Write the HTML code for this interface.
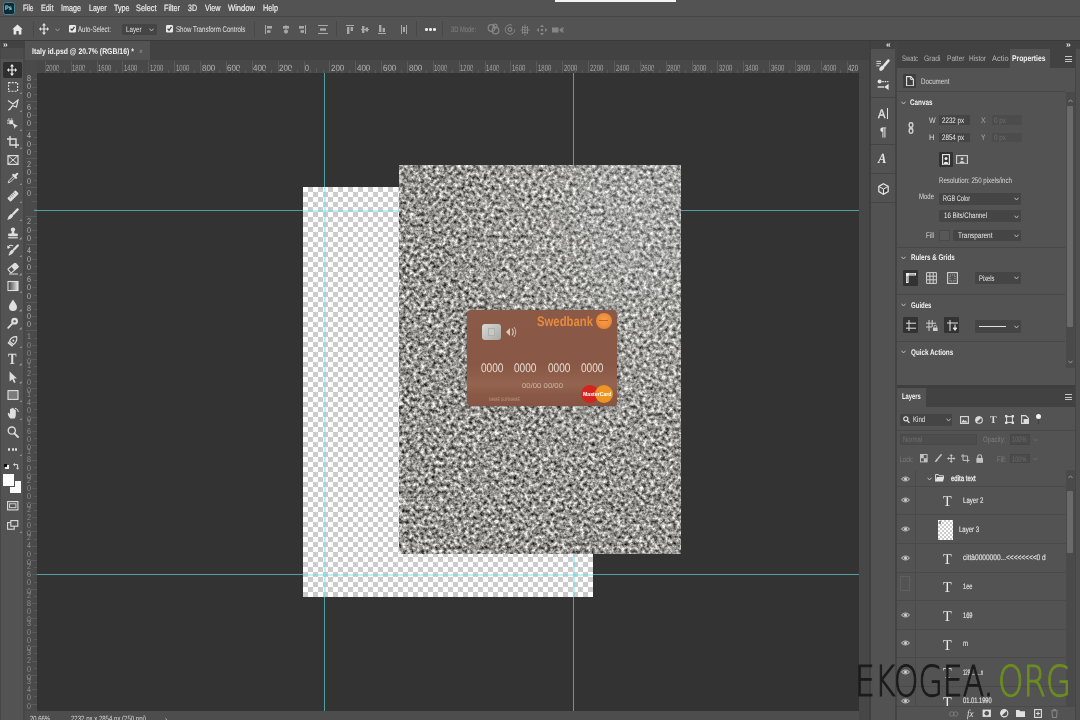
<!DOCTYPE html>
<html lang="en"><head><meta charset="utf-8"><title>Italy id.psd @ 20.7% (RGB/16)</title>
<style>
html,body{margin:0;padding:0;background:#535353;}
#app{position:relative;width:1080px;height:720px;overflow:hidden;font-family:"Liberation Sans",sans-serif;}
.r{position:absolute;display:block;}
.t{position:absolute;white-space:nowrap;line-height:1;transform-origin:0 50%;font-family:"Liberation Sans",sans-serif;text-rendering:geometricPrecision;}
</style></head>
<body><div id="app">
<div class="r" style="left:0px;top:0px;width:1080px;height:720px;background:#535353;"></div>
<div class="r" style="left:0px;top:16px;width:1080px;height:1px;background:#464646;"></div>
<div class="r" style="left:0px;top:40px;width:1080px;height:1px;background:#3a3a3a;"></div>
<div class="r" style="left:0px;top:41px;width:870px;height:19px;background:#424242;"></div>
<div class="r" style="left:25px;top:41px;width:125px;height:19px;background:#535353;"></div>
<div class="r" style="left:0px;top:41px;width:25px;height:679px;background:#535353;"></div>
<div class="r" style="left:0px;top:41px;width:25px;height:6.5px;background:#424242;"></div>
<div class="r" style="left:0px;top:47.5px;width:25px;height:11.5px;background:#4c4c4c;"></div>
<div class="r" style="left:25px;top:60px;width:835px;height:13px;background:#484848;"></div>
<div class="r" style="left:25px;top:60px;width:12px;height:651px;background:#4a4a4a;"></div>
<div class="r" style="left:37px;top:73px;width:823px;height:638px;background:#333333;"></div>
<div class="r" style="left:25px;top:711px;width:835px;height:9px;background:#4d4d4d;"></div>
<div class="r" style="left:860px;top:41px;width:10px;height:679px;background:#424242;"></div>
<div class="r" style="left:870px;top:41px;width:210px;height:679px;background:#424242;"></div>
<div class="r" style="left:303px;top:187px;width:290px;height:410px;background-color:#fff;background-image:linear-gradient(45deg,#ccc 25%,transparent 25%,transparent 75%,#ccc 75%),linear-gradient(45deg,#ccc 25%,transparent 25%,transparent 75%,#ccc 75%);background-size:10px 10px;background-position:0 0,5px 5px;"></div>
<div class="r" style="left:324px;top:73px;width:1px;height:114px;background:#529ea4;"></div>
<div class="r" style="left:324px;top:597px;width:1px;height:114px;background:#529ea4;"></div>
<div class="r" style="left:573px;top:73px;width:1px;height:114px;background:#529ea4;"></div>
<div class="r" style="left:573px;top:597px;width:1px;height:114px;background:#529ea4;"></div>
<div class="r" style="left:34px;top:210px;width:269px;height:1px;background:#529ea4;"></div>
<div class="r" style="left:593px;top:210px;width:267px;height:1px;background:#529ea4;"></div>
<div class="r" style="left:34px;top:574px;width:269px;height:1px;background:#529ea4;"></div>
<div class="r" style="left:593px;top:574px;width:267px;height:1px;background:#529ea4;"></div>
<div class="r" style="left:323.5px;top:187px;width:2px;height:410px;background:rgba(110,222,232,.42);"></div>
<div class="r" style="left:572.5px;top:187px;width:2px;height:410px;background:rgba(110,222,232,.42);"></div>
<div class="r" style="left:303px;top:209.5px;width:290px;height:2px;background:rgba(110,222,232,.42);"></div>
<div class="r" style="left:303px;top:573.5px;width:290px;height:2px;background:rgba(110,222,232,.42);"></div>
<svg class="r" style="left:399px;top:165px" width="282" height="389" viewBox="0 0 282 389"><defs><filter id="gr" x="0" y="0" width="100%" height="100%" color-interpolation-filters="sRGB"><feTurbulence type="fractalNoise" baseFrequency="0.27" numOctaves="3" seed="7" result="n"/><feColorMatrix type="matrix" values="1.4 0 0 0 -0.115  1.4 0 0 0 -0.120  1.4 0 0 0 -0.135  0 0 0 0 1"/></filter></defs><rect width="282" height="389" fill="#84837e"/><rect width="282" height="389" filter="url(#gr)"/><defs><radialGradient id="pl" cx="0.85" cy="0.12" r="0.7"><stop offset="0" stop-color="#e8eef2" stop-opacity=".22"/><stop offset="1" stop-color="#e8eef2" stop-opacity="0"/></radialGradient></defs><rect width="282" height="389" fill="url(#pl)"/></svg>
<div class="r" style="left:467px;top:309.5px;width:150.3px;height:96.5px;border-radius:4px;background:linear-gradient(180deg,#8b5a47 0%,#885745 55%,#94644f 78%,#8a5946 88%,#855443 100%);box-shadow:0 0 2px rgba(40,30,25,.6);"></div>
<span class="t " style="left:537.00px;top:315.00px;font-size:13.8px;color:#e88a3e;font-weight:700;transform:scaleX(0.820);">Swedbank</span>
<div class="r" style="left:595.5px;top:312.5px;width:16px;height:16px;border-radius:50%;background:radial-gradient(circle at 50% 45%,#f6a04a,#e57a2c);"></div>
<div class="r" style="left:599px;top:319.8px;width:9px;height:1.6px;background:#c96420;"></div>
<div class="r" style="left:482px;top:324px;width:19px;height:16px;border-radius:3px;background:linear-gradient(135deg,#d9d9d6,#a9a9a6);"></div>
<div class="r" style="left:488px;top:328px;width:7px;height:8px;background:#c8c8c5;border:1px solid #b0b0ad;box-sizing:border-box;"></div>
<svg class="r" style="left:505px;top:325px;" width="12" height="14" viewBox="0 0 12 14"><path d="M1 7 L5 3 L5 11 Z" fill="#d8c9c0"/><path d="M7 3.5 Q9.5 7 7 10.5" stroke="#d8c9c0" stroke-width="1.2" fill="none"/><path d="M9 2 Q12.5 7 9 12" stroke="#c9b6ab" stroke-width="1" fill="none"/></svg>
<span class="t emb" style="left:481.00px;top:362.00px;font-size:12.4px;color:#e9dcd3;transform:scaleX(0.816);">0000</span>
<span class="t emb" style="left:514.00px;top:362.00px;font-size:12.4px;color:#e9dcd3;transform:scaleX(0.816);">0000</span>
<span class="t emb" style="left:548.00px;top:362.00px;font-size:12.4px;color:#e9dcd3;transform:scaleX(0.816);">0000</span>
<span class="t emb" style="left:581.00px;top:362.00px;font-size:12.4px;color:#e9dcd3;transform:scaleX(0.816);">0000</span>
<span class="t " style="left:522.00px;top:383.00px;font-size:7px;color:#d9c6bb;opacity:0.8;transform:scaleX(1.109);">00/00 00/00</span>
<span class="t " style="left:489.00px;top:398.00px;font-size:5px;color:#c9ab9d;opacity:0.8;transform:scaleX(0.759);">NAME SURNAME</span>
<div class="r" style="left:581px;top:384.5px;width:18px;height:18px;border-radius:50%;background:#d4241f;"></div>
<div class="r" style="left:594.5px;top:384.5px;width:18px;height:18px;border-radius:50%;background:#f39a1e;opacity:.93"></div>
<span class="t " style="left:582.50px;top:393.00px;font-size:5.8px;color:#fff;font-weight:700;transform:scaleX(0.893);">MasterCard</span>
<div class="r" style="left:555px;top:0px;width:121px;height:2px;background:#f4f4f4;"></div>
<div class="r" style="left:2.6px;top:2.4px;width:12.2px;height:12.2px;border-radius:2.6px;background:#0a2c36;border:1.3px solid #4c8190;box-sizing:border-box;"></div>
<span class="t " style="left:5.20px;top:6.00px;font-size:6.4px;color:#9adbe8;font-weight:700;transform:scaleX(0.894);">Ps</span>
<span class="t " style="left:22.50px;top:4.00px;font-size:9.2px;color:#ececec;-webkit-text-stroke:0.2px #ececec;transform:scaleX(0.708);">File</span>
<span class="t " style="left:40.50px;top:4.00px;font-size:9.2px;color:#ececec;-webkit-text-stroke:0.2px #ececec;transform:scaleX(0.788);">Edit</span>
<span class="t " style="left:61.00px;top:4.00px;font-size:9.2px;color:#ececec;-webkit-text-stroke:0.2px #ececec;transform:scaleX(0.782);">Image</span>
<span class="t " style="left:89.00px;top:4.00px;font-size:9.2px;color:#ececec;-webkit-text-stroke:0.2px #ececec;transform:scaleX(0.760);">Layer</span>
<span class="t " style="left:114.00px;top:4.00px;font-size:9.2px;color:#ececec;-webkit-text-stroke:0.2px #ececec;transform:scaleX(0.777);">Type</span>
<span class="t " style="left:136.00px;top:4.00px;font-size:9.2px;color:#ececec;-webkit-text-stroke:0.2px #ececec;transform:scaleX(0.802);">Select</span>
<span class="t " style="left:164.00px;top:4.00px;font-size:9.2px;color:#ececec;-webkit-text-stroke:0.2px #ececec;transform:scaleX(0.783);">Filter</span>
<span class="t " style="left:188.00px;top:4.00px;font-size:9.2px;color:#ececec;-webkit-text-stroke:0.2px #ececec;transform:scaleX(0.765);">3D</span>
<span class="t " style="left:204.50px;top:4.00px;font-size:9.2px;color:#ececec;-webkit-text-stroke:0.2px #ececec;transform:scaleX(0.784);">View</span>
<span class="t " style="left:228.00px;top:4.00px;font-size:9.2px;color:#ececec;-webkit-text-stroke:0.2px #ececec;transform:scaleX(0.825);">Window</span>
<span class="t " style="left:263.00px;top:4.00px;font-size:9.2px;color:#ececec;-webkit-text-stroke:0.2px #ececec;transform:scaleX(0.793);">Help</span>
<svg class="r" style="left:12px;top:24px;" width="11" height="11" viewBox="0 0 11 11"><path d="M5.5 0.6 L0.3 5.3 L1.6 5.3 L1.6 10.6 L4.3 10.6 L4.3 7 L6.7 7 L6.7 10.6 L9.4 10.6 L9.4 5.3 L10.7 5.3 Z" fill="#e8e8e8"/></svg>
<div class="r" style="left:33px;top:21px;width:1px;height:16px;background:#484848;"></div>
<svg class="r" style="left:38.5px;top:23px;" width="10" height="12" viewBox="0 0 10 12"><path d="M5 0 L7 2.4 H5.6 V5.4 H8 V4 L10 6 L8 8 V6.6 H5.6 V9.6 H7 L5 12 L3 9.6 H4.4 V6.6 H2 V8 L0 6 L2 4 V5.4 H4.4 V2.4 H3 Z" fill="#e4e4e4"/></svg>
<svg class="r" style="left:55px;top:27.5px;" width="5" height="4" viewBox="0 0 5 4"><path d="M0.5 0.7 L2.5 3 L4.5 0.7" stroke="#9a9a9a" stroke-width="1" fill="none"/></svg>
<svg class="r" style="left:68.5px;top:25px;" width="7" height="7.5" viewBox="0 0 7 7.5"><rect x="0" y="0" width="7" height="7.5" rx="1.3" fill="#e9e9e9"/><path d="M1.6 3.6 L3 5.3 L5.5 1.9" stroke="#3b3b3b" stroke-width="1.3" fill="none"/></svg>
<span class="t " style="left:78.00px;top:26.00px;font-size:8.2px;color:#e4e4e4;transform:scaleX(0.739);">Auto-Select:</span>
<div class="r" style="left:122px;top:23.5px;width:35px;height:11.5px;background:#454545;border-radius:1.5px;"></div>
<span class="t " style="left:126.00px;top:26.00px;font-size:8px;color:#e4e4e4;transform:scaleX(0.775);">Layer</span>
<svg class="r" style="left:148.5px;top:27.5px;" width="5" height="4" viewBox="0 0 5 4"><path d="M0.5 0.7 L2.5 3 L4.5 0.7" stroke="#bdbdbd" stroke-width="1" fill="none"/></svg>
<svg class="r" style="left:165.5px;top:25px;" width="7" height="7.5" viewBox="0 0 7 7.5"><rect x="0" y="0" width="7" height="7.5" rx="1.3" fill="#e9e9e9"/><path d="M1.6 3.6 L3 5.3 L5.5 1.9" stroke="#3b3b3b" stroke-width="1.3" fill="none"/></svg>
<span class="t " style="left:175.50px;top:26.00px;font-size:8.2px;color:#e4e4e4;transform:scaleX(0.751);">Show Transform Controls</span>
<div class="r" style="left:254px;top:21px;width:1px;height:16px;background:#484848;"></div>
<svg class="r" style="left:265px;top:24.5px;" width="8" height="9" viewBox="0 0 8 9"><rect x="0" y="0" width="1" height="9" fill="#a8a8a8"/><rect x="2" y="1" width="5" height="2.6" fill="#a8a8a8"/><rect x="2" y="5.2" width="3.5" height="2.6" fill="#a8a8a8"/></svg>
<svg class="r" style="left:282px;top:24.5px;" width="8" height="9" viewBox="0 0 8 9"><rect x="3.5" y="0" width="1" height="9" fill="#a8a8a8"/><rect x="1" y="1" width="6" height="2.6" fill="#a8a8a8"/><rect x="2" y="5.2" width="4" height="2.6" fill="#a8a8a8"/></svg>
<svg class="r" style="left:297.5px;top:24.5px;" width="8" height="9" viewBox="0 0 8 9"><rect x="7" y="0" width="1" height="9" fill="#a8a8a8"/><rect x="1" y="1" width="5" height="2.6" fill="#a8a8a8"/><rect x="2.5" y="5.2" width="3.5" height="2.6" fill="#a8a8a8"/></svg>
<svg class="r" style="left:317.5px;top:24.5px;" width="10" height="9" viewBox="0 0 10 9"><rect x="0" y="0" width="10" height="1" fill="#a8a8a8"/><rect x="0" y="8" width="10" height="1" fill="#a8a8a8"/><rect x="2" y="3.3" width="6" height="2.4" fill="#a8a8a8"/></svg>
<div class="r" style="left:336px;top:21px;width:1px;height:16px;background:#484848;"></div>
<svg class="r" style="left:346px;top:24.5px;" width="8" height="9" viewBox="0 0 8 9"><rect x="0" y="0" width="8" height="1" fill="#a8a8a8"/><rect x="1" y="2" width="2.4" height="7" fill="#a8a8a8"/><rect x="4.6" y="2" width="2.4" height="4" fill="#a8a8a8"/></svg>
<svg class="r" style="left:361px;top:24.5px;" width="8" height="9" viewBox="0 0 8 9"><rect x="0" y="4" width="8" height="1" fill="#a8a8a8"/><rect x="1" y="1" width="2.4" height="7" fill="#a8a8a8"/><rect x="4.6" y="2.5" width="2.4" height="4" fill="#a8a8a8"/></svg>
<svg class="r" style="left:378px;top:24.5px;" width="8" height="9" viewBox="0 0 8 9"><rect x="0" y="8" width="8" height="1" fill="#a8a8a8"/><rect x="1" y="0" width="2.4" height="7" fill="#a8a8a8"/><rect x="4.6" y="3" width="2.4" height="4" fill="#a8a8a8"/></svg>
<svg class="r" style="left:401px;top:24.5px;" width="6" height="9" viewBox="0 0 6 9"><rect x="0" y="0" width="1" height="9" fill="#a8a8a8"/><rect x="5" y="0" width="1" height="9" fill="#a8a8a8"/><rect x="2" y="2" width="2" height="5" fill="#a8a8a8"/></svg>
<div class="r" style="left:416px;top:21px;width:1px;height:16px;background:#484848;"></div>
<div class="r" style="left:425.0px;top:28.3px;width:2.6px;height:2.6px;border-radius:50%;background:#ededed;"></div>
<div class="r" style="left:429.2px;top:28.3px;width:2.6px;height:2.6px;border-radius:50%;background:#ededed;"></div>
<div class="r" style="left:433.4px;top:28.3px;width:2.6px;height:2.6px;border-radius:50%;background:#ededed;"></div>
<div class="r" style="left:442px;top:21px;width:1px;height:16px;background:#484848;"></div>
<span class="t " style="left:451.00px;top:26.00px;font-size:8px;color:#7c7c7c;-webkit-text-stroke:0.15px #7c7c7c;transform:scaleX(0.721);">3D Mode:</span>
<svg class="r" style="left:487px;top:23px;" width="13" height="13" viewBox="0 0 13 13"><circle cx="4.5" cy="5" r="3.3" stroke="#868686" stroke-width="1.25" fill="none"/><circle cx="8.5" cy="7.5" r="3.3" stroke="#868686" stroke-width="1.25" fill="none"/><circle cx="8" cy="3" r="2" stroke="#868686" stroke-width="1.25" fill="none"/></svg>
<svg class="r" style="left:504px;top:23px;" width="12" height="13" viewBox="0 0 12 13"><circle cx="6" cy="6.5" r="4.8" stroke="#868686" fill="none" stroke-dasharray="24 6"/><circle cx="6" cy="6.5" r="1.8" stroke="#868686" stroke-width="1.25" fill="none"/></svg>
<svg class="r" style="left:520px;top:23.5px;" width="10" height="12" viewBox="0 0 10 12"><path d="M5 0.5V11.5M0.5 6H9.5M2 3.5H8M2 8.5H8M2.5 2V10M7.5 2V10" stroke="#868686" stroke-width="0.9" fill="none"/></svg>
<svg class="r" style="left:536px;top:23.5px;" width="12" height="12" viewBox="0 0 12 12"><path d="M6 0.5L8 3H4ZM6 11.5L8 9H4ZM0.5 6L3 4V8ZM11.5 6L9 4V8Z" fill="#868686"/><circle cx="6" cy="6" r="1.2" fill="#868686"/></svg>
<svg class="r" style="left:552px;top:25.5px;" width="12" height="8" viewBox="0 0 12 8"><rect x="0" y="1.5" width="6.5" height="5" fill="#868686"/><path d="M7 4L10.5 1V7Z" fill="#868686"/><path d="M11.5 1.5L10.5 4L11.5 6.5" stroke="#868686" fill="none" stroke-width=".8"/></svg>
<span class="t " style="left:32.00px;top:48.00px;font-size:8.2px;color:#f4f4f4;font-weight:700;transform:scaleX(0.840);">Italy id.psd @ 20.7% (RGB/16) *</span>
<span class="t " style="left:139.30px;top:48.00px;font-size:8px;color:#9a9a9a;transform:scaleX(0.813);">×</span>
<div class="r" style="left:25px;top:60px;width:12px;height:13px;background:#4a4a4a;"></div>
<div class="r" style="left:45px;top:61px;width:1px;height:12px;background:#5a5a5a;"></div>
<span class="t " style="left:46.40px;top:64.00px;font-size:9px;color:#a4a4a4;transform:scaleX(0.664);">2000</span>
<div class="r" style="left:51px;top:70px;width:1px;height:3px;background:#5a5a5a;"></div>
<div class="r" style="left:58px;top:68px;width:1px;height:5px;background:#5a5a5a;"></div>
<div class="r" style="left:64px;top:70px;width:1px;height:3px;background:#5a5a5a;"></div>
<div class="r" style="left:71px;top:61px;width:1px;height:12px;background:#5a5a5a;"></div>
<span class="t " style="left:72.27px;top:64.00px;font-size:9px;color:#a4a4a4;transform:scaleX(0.664);">1800</span>
<div class="r" style="left:77px;top:70px;width:1px;height:3px;background:#5a5a5a;"></div>
<div class="r" style="left:84px;top:68px;width:1px;height:5px;background:#5a5a5a;"></div>
<div class="r" style="left:90px;top:70px;width:1px;height:3px;background:#5a5a5a;"></div>
<div class="r" style="left:97px;top:61px;width:1px;height:12px;background:#5a5a5a;"></div>
<span class="t " style="left:98.14px;top:64.00px;font-size:9px;color:#a4a4a4;transform:scaleX(0.664);">1600</span>
<div class="r" style="left:103px;top:70px;width:1px;height:3px;background:#5a5a5a;"></div>
<div class="r" style="left:109px;top:68px;width:1px;height:5px;background:#5a5a5a;"></div>
<div class="r" style="left:116px;top:70px;width:1px;height:3px;background:#5a5a5a;"></div>
<div class="r" style="left:122px;top:61px;width:1px;height:12px;background:#5a5a5a;"></div>
<span class="t " style="left:124.01px;top:64.00px;font-size:9px;color:#a4a4a4;transform:scaleX(0.664);">1400</span>
<div class="r" style="left:129px;top:70px;width:1px;height:3px;background:#5a5a5a;"></div>
<div class="r" style="left:135px;top:68px;width:1px;height:5px;background:#5a5a5a;"></div>
<div class="r" style="left:142px;top:70px;width:1px;height:3px;background:#5a5a5a;"></div>
<div class="r" style="left:148px;top:61px;width:1px;height:12px;background:#5a5a5a;"></div>
<span class="t " style="left:149.88px;top:64.00px;font-size:9px;color:#a4a4a4;transform:scaleX(0.664);">1200</span>
<div class="r" style="left:155px;top:70px;width:1px;height:3px;background:#5a5a5a;"></div>
<div class="r" style="left:161px;top:68px;width:1px;height:5px;background:#5a5a5a;"></div>
<div class="r" style="left:168px;top:70px;width:1px;height:3px;background:#5a5a5a;"></div>
<div class="r" style="left:174px;top:61px;width:1px;height:12px;background:#5a5a5a;"></div>
<span class="t " style="left:175.75px;top:64.00px;font-size:9px;color:#a4a4a4;transform:scaleX(0.664);">1000</span>
<div class="r" style="left:181px;top:70px;width:1px;height:3px;background:#5a5a5a;"></div>
<div class="r" style="left:187px;top:68px;width:1px;height:5px;background:#5a5a5a;"></div>
<div class="r" style="left:194px;top:70px;width:1px;height:3px;background:#5a5a5a;"></div>
<div class="r" style="left:200px;top:61px;width:1px;height:12px;background:#5a5a5a;"></div>
<span class="t " style="left:201.62px;top:64.00px;font-size:9px;color:#b4b4b4;transform:scaleX(0.886);">800</span>
<div class="r" style="left:206px;top:70px;width:1px;height:3px;background:#5a5a5a;"></div>
<div class="r" style="left:213px;top:68px;width:1px;height:5px;background:#5a5a5a;"></div>
<div class="r" style="left:219px;top:70px;width:1px;height:3px;background:#5a5a5a;"></div>
<div class="r" style="left:226px;top:61px;width:1px;height:12px;background:#5a5a5a;"></div>
<span class="t " style="left:227.49px;top:64.00px;font-size:9px;color:#b4b4b4;transform:scaleX(0.886);">600</span>
<div class="r" style="left:232px;top:70px;width:1px;height:3px;background:#5a5a5a;"></div>
<div class="r" style="left:239px;top:68px;width:1px;height:5px;background:#5a5a5a;"></div>
<div class="r" style="left:245px;top:70px;width:1px;height:3px;background:#5a5a5a;"></div>
<div class="r" style="left:252px;top:61px;width:1px;height:12px;background:#5a5a5a;"></div>
<span class="t " style="left:253.36px;top:64.00px;font-size:9px;color:#b4b4b4;transform:scaleX(0.886);">400</span>
<div class="r" style="left:258px;top:70px;width:1px;height:3px;background:#5a5a5a;"></div>
<div class="r" style="left:265px;top:68px;width:1px;height:5px;background:#5a5a5a;"></div>
<div class="r" style="left:271px;top:70px;width:1px;height:3px;background:#5a5a5a;"></div>
<div class="r" style="left:278px;top:61px;width:1px;height:12px;background:#5a5a5a;"></div>
<span class="t " style="left:279.23px;top:64.00px;font-size:9px;color:#b4b4b4;transform:scaleX(0.886);">200</span>
<div class="r" style="left:284px;top:70px;width:1px;height:3px;background:#5a5a5a;"></div>
<div class="r" style="left:291px;top:68px;width:1px;height:5px;background:#5a5a5a;"></div>
<div class="r" style="left:297px;top:70px;width:1px;height:3px;background:#5a5a5a;"></div>
<div class="r" style="left:304px;top:61px;width:1px;height:12px;background:#5a5a5a;"></div>
<span class="t " style="left:305.10px;top:64.00px;font-size:9px;color:#b4b4b4;transform:scaleX(0.799);">0</span>
<div class="r" style="left:310px;top:70px;width:1px;height:3px;background:#5a5a5a;"></div>
<div class="r" style="left:316px;top:68px;width:1px;height:5px;background:#5a5a5a;"></div>
<div class="r" style="left:323px;top:70px;width:1px;height:3px;background:#5a5a5a;"></div>
<div class="r" style="left:329px;top:61px;width:1px;height:12px;background:#5a5a5a;"></div>
<span class="t " style="left:330.97px;top:64.00px;font-size:9px;color:#b4b4b4;transform:scaleX(0.886);">200</span>
<div class="r" style="left:336px;top:70px;width:1px;height:3px;background:#5a5a5a;"></div>
<div class="r" style="left:342px;top:68px;width:1px;height:5px;background:#5a5a5a;"></div>
<div class="r" style="left:349px;top:70px;width:1px;height:3px;background:#5a5a5a;"></div>
<div class="r" style="left:355px;top:61px;width:1px;height:12px;background:#5a5a5a;"></div>
<span class="t " style="left:356.84px;top:64.00px;font-size:9px;color:#b4b4b4;transform:scaleX(0.886);">400</span>
<div class="r" style="left:362px;top:70px;width:1px;height:3px;background:#5a5a5a;"></div>
<div class="r" style="left:368px;top:68px;width:1px;height:5px;background:#5a5a5a;"></div>
<div class="r" style="left:375px;top:70px;width:1px;height:3px;background:#5a5a5a;"></div>
<div class="r" style="left:381px;top:61px;width:1px;height:12px;background:#5a5a5a;"></div>
<span class="t " style="left:382.71px;top:64.00px;font-size:9px;color:#b4b4b4;transform:scaleX(0.886);">600</span>
<div class="r" style="left:388px;top:70px;width:1px;height:3px;background:#5a5a5a;"></div>
<div class="r" style="left:394px;top:68px;width:1px;height:5px;background:#5a5a5a;"></div>
<div class="r" style="left:401px;top:70px;width:1px;height:3px;background:#5a5a5a;"></div>
<div class="r" style="left:407px;top:61px;width:1px;height:12px;background:#5a5a5a;"></div>
<span class="t " style="left:408.58px;top:64.00px;font-size:9px;color:#b4b4b4;transform:scaleX(0.886);">800</span>
<div class="r" style="left:413px;top:70px;width:1px;height:3px;background:#5a5a5a;"></div>
<div class="r" style="left:420px;top:68px;width:1px;height:5px;background:#5a5a5a;"></div>
<div class="r" style="left:426px;top:70px;width:1px;height:3px;background:#5a5a5a;"></div>
<div class="r" style="left:433px;top:61px;width:1px;height:12px;background:#5a5a5a;"></div>
<span class="t " style="left:434.45px;top:64.00px;font-size:9px;color:#a4a4a4;transform:scaleX(0.664);">1000</span>
<div class="r" style="left:439px;top:70px;width:1px;height:3px;background:#5a5a5a;"></div>
<div class="r" style="left:446px;top:68px;width:1px;height:5px;background:#5a5a5a;"></div>
<div class="r" style="left:452px;top:70px;width:1px;height:3px;background:#5a5a5a;"></div>
<div class="r" style="left:459px;top:61px;width:1px;height:12px;background:#5a5a5a;"></div>
<span class="t " style="left:460.32px;top:64.00px;font-size:9px;color:#a4a4a4;transform:scaleX(0.664);">1200</span>
<div class="r" style="left:465px;top:70px;width:1px;height:3px;background:#5a5a5a;"></div>
<div class="r" style="left:472px;top:68px;width:1px;height:5px;background:#5a5a5a;"></div>
<div class="r" style="left:478px;top:70px;width:1px;height:3px;background:#5a5a5a;"></div>
<div class="r" style="left:485px;top:61px;width:1px;height:12px;background:#5a5a5a;"></div>
<span class="t " style="left:486.19px;top:64.00px;font-size:9px;color:#a4a4a4;transform:scaleX(0.664);">1400</span>
<div class="r" style="left:491px;top:70px;width:1px;height:3px;background:#5a5a5a;"></div>
<div class="r" style="left:498px;top:68px;width:1px;height:5px;background:#5a5a5a;"></div>
<div class="r" style="left:504px;top:70px;width:1px;height:3px;background:#5a5a5a;"></div>
<div class="r" style="left:510px;top:61px;width:1px;height:12px;background:#5a5a5a;"></div>
<span class="t " style="left:512.06px;top:64.00px;font-size:9px;color:#a4a4a4;transform:scaleX(0.664);">1600</span>
<div class="r" style="left:517px;top:70px;width:1px;height:3px;background:#5a5a5a;"></div>
<div class="r" style="left:523px;top:68px;width:1px;height:5px;background:#5a5a5a;"></div>
<div class="r" style="left:530px;top:70px;width:1px;height:3px;background:#5a5a5a;"></div>
<div class="r" style="left:536px;top:61px;width:1px;height:12px;background:#5a5a5a;"></div>
<span class="t " style="left:537.93px;top:64.00px;font-size:9px;color:#a4a4a4;transform:scaleX(0.664);">1800</span>
<div class="r" style="left:543px;top:70px;width:1px;height:3px;background:#5a5a5a;"></div>
<div class="r" style="left:549px;top:68px;width:1px;height:5px;background:#5a5a5a;"></div>
<div class="r" style="left:556px;top:70px;width:1px;height:3px;background:#5a5a5a;"></div>
<div class="r" style="left:562px;top:61px;width:1px;height:12px;background:#5a5a5a;"></div>
<span class="t " style="left:563.80px;top:64.00px;font-size:9px;color:#a4a4a4;transform:scaleX(0.664);">2000</span>
<div class="r" style="left:569px;top:70px;width:1px;height:3px;background:#5a5a5a;"></div>
<div class="r" style="left:575px;top:68px;width:1px;height:5px;background:#5a5a5a;"></div>
<div class="r" style="left:582px;top:70px;width:1px;height:3px;background:#5a5a5a;"></div>
<div class="r" style="left:588px;top:61px;width:1px;height:12px;background:#5a5a5a;"></div>
<span class="t " style="left:589.67px;top:64.00px;font-size:9px;color:#a4a4a4;transform:scaleX(0.664);">2200</span>
<div class="r" style="left:595px;top:70px;width:1px;height:3px;background:#5a5a5a;"></div>
<div class="r" style="left:601px;top:68px;width:1px;height:5px;background:#5a5a5a;"></div>
<div class="r" style="left:607px;top:70px;width:1px;height:3px;background:#5a5a5a;"></div>
<div class="r" style="left:614px;top:61px;width:1px;height:12px;background:#5a5a5a;"></div>
<span class="t " style="left:615.54px;top:64.00px;font-size:9px;color:#a4a4a4;transform:scaleX(0.664);">2400</span>
<div class="r" style="left:620px;top:70px;width:1px;height:3px;background:#5a5a5a;"></div>
<div class="r" style="left:627px;top:68px;width:1px;height:5px;background:#5a5a5a;"></div>
<div class="r" style="left:633px;top:70px;width:1px;height:3px;background:#5a5a5a;"></div>
<div class="r" style="left:640px;top:61px;width:1px;height:12px;background:#5a5a5a;"></div>
<span class="t " style="left:641.41px;top:64.00px;font-size:9px;color:#a4a4a4;transform:scaleX(0.664);">2600</span>
<div class="r" style="left:646px;top:70px;width:1px;height:3px;background:#5a5a5a;"></div>
<div class="r" style="left:653px;top:68px;width:1px;height:5px;background:#5a5a5a;"></div>
<div class="r" style="left:659px;top:70px;width:1px;height:3px;background:#5a5a5a;"></div>
<div class="r" style="left:666px;top:61px;width:1px;height:12px;background:#5a5a5a;"></div>
<span class="t " style="left:667.28px;top:64.00px;font-size:9px;color:#a4a4a4;transform:scaleX(0.664);">2800</span>
<div class="r" style="left:672px;top:70px;width:1px;height:3px;background:#5a5a5a;"></div>
<div class="r" style="left:679px;top:68px;width:1px;height:5px;background:#5a5a5a;"></div>
<div class="r" style="left:685px;top:70px;width:1px;height:3px;background:#5a5a5a;"></div>
<div class="r" style="left:692px;top:61px;width:1px;height:12px;background:#5a5a5a;"></div>
<span class="t " style="left:693.15px;top:64.00px;font-size:9px;color:#a4a4a4;transform:scaleX(0.664);">3000</span>
<div class="r" style="left:698px;top:70px;width:1px;height:3px;background:#5a5a5a;"></div>
<div class="r" style="left:704px;top:68px;width:1px;height:5px;background:#5a5a5a;"></div>
<div class="r" style="left:711px;top:70px;width:1px;height:3px;background:#5a5a5a;"></div>
<div class="r" style="left:717px;top:61px;width:1px;height:12px;background:#5a5a5a;"></div>
<span class="t " style="left:719.02px;top:64.00px;font-size:9px;color:#a4a4a4;transform:scaleX(0.664);">3200</span>
<div class="r" style="left:724px;top:70px;width:1px;height:3px;background:#5a5a5a;"></div>
<div class="r" style="left:730px;top:68px;width:1px;height:5px;background:#5a5a5a;"></div>
<div class="r" style="left:737px;top:70px;width:1px;height:3px;background:#5a5a5a;"></div>
<div class="r" style="left:743px;top:61px;width:1px;height:12px;background:#5a5a5a;"></div>
<span class="t " style="left:744.89px;top:64.00px;font-size:9px;color:#a4a4a4;transform:scaleX(0.664);">3400</span>
<div class="r" style="left:750px;top:70px;width:1px;height:3px;background:#5a5a5a;"></div>
<div class="r" style="left:756px;top:68px;width:1px;height:5px;background:#5a5a5a;"></div>
<div class="r" style="left:763px;top:70px;width:1px;height:3px;background:#5a5a5a;"></div>
<div class="r" style="left:769px;top:61px;width:1px;height:12px;background:#5a5a5a;"></div>
<span class="t " style="left:770.76px;top:64.00px;font-size:9px;color:#a4a4a4;transform:scaleX(0.664);">3600</span>
<div class="r" style="left:776px;top:70px;width:1px;height:3px;background:#5a5a5a;"></div>
<div class="r" style="left:782px;top:68px;width:1px;height:5px;background:#5a5a5a;"></div>
<div class="r" style="left:789px;top:70px;width:1px;height:3px;background:#5a5a5a;"></div>
<div class="r" style="left:795px;top:61px;width:1px;height:12px;background:#5a5a5a;"></div>
<span class="t " style="left:796.63px;top:64.00px;font-size:9px;color:#a4a4a4;transform:scaleX(0.664);">3800</span>
<div class="r" style="left:801px;top:70px;width:1px;height:3px;background:#5a5a5a;"></div>
<div class="r" style="left:808px;top:68px;width:1px;height:5px;background:#5a5a5a;"></div>
<div class="r" style="left:814px;top:70px;width:1px;height:3px;background:#5a5a5a;"></div>
<div class="r" style="left:821px;top:61px;width:1px;height:12px;background:#5a5a5a;"></div>
<span class="t " style="left:822.50px;top:64.00px;font-size:9px;color:#a4a4a4;transform:scaleX(0.664);">4000</span>
<div class="r" style="left:827px;top:70px;width:1px;height:3px;background:#5a5a5a;"></div>
<div class="r" style="left:834px;top:68px;width:1px;height:5px;background:#5a5a5a;"></div>
<div class="r" style="left:840px;top:70px;width:1px;height:3px;background:#5a5a5a;"></div>
<div class="r" style="left:847px;top:61px;width:1px;height:12px;background:#5a5a5a;"></div>
<span class="t " style="left:848.37px;top:64.00px;font-size:9px;color:#b4b4b4;transform:scaleX(0.666);">420</span>
<div class="r" style="left:853px;top:70px;width:1px;height:3px;background:#5a5a5a;"></div>
<span class="t " style="left:27.00px;top:74.00px;font-size:8.4px;color:#b4b4b4;transform:scaleX(0.856);">8</span>
<span class="t " style="left:27.00px;top:82.00px;font-size:8.4px;color:#b4b4b4;transform:scaleX(0.856);">0</span>
<span class="t " style="left:27.00px;top:91.00px;font-size:8.4px;color:#b4b4b4;transform:scaleX(0.856);">0</span>
<div class="r" style="left:34px;top:79px;width:3px;height:1px;background:#5a5a5a;"></div>
<div class="r" style="left:32px;top:87px;width:5px;height:1px;background:#5a5a5a;"></div>
<div class="r" style="left:34px;top:94px;width:3px;height:1px;background:#5a5a5a;"></div>
<div class="r" style="left:26px;top:101px;width:11px;height:1px;background:#5a5a5a;"></div>
<span class="t " style="left:27.00px;top:103.00px;font-size:8.4px;color:#b4b4b4;transform:scaleX(0.856);">6</span>
<span class="t " style="left:27.00px;top:111.00px;font-size:8.4px;color:#b4b4b4;transform:scaleX(0.856);">0</span>
<span class="t " style="left:27.00px;top:119.00px;font-size:8.4px;color:#b4b4b4;transform:scaleX(0.856);">0</span>
<div class="r" style="left:34px;top:108px;width:3px;height:1px;background:#5a5a5a;"></div>
<div class="r" style="left:32px;top:115px;width:5px;height:1px;background:#5a5a5a;"></div>
<div class="r" style="left:34px;top:122px;width:3px;height:1px;background:#5a5a5a;"></div>
<div class="r" style="left:26px;top:130px;width:11px;height:1px;background:#5a5a5a;"></div>
<span class="t " style="left:27.00px;top:131.00px;font-size:8.4px;color:#b4b4b4;transform:scaleX(0.856);">4</span>
<span class="t " style="left:27.00px;top:140.00px;font-size:8.4px;color:#b4b4b4;transform:scaleX(0.856);">0</span>
<span class="t " style="left:27.00px;top:148.00px;font-size:8.4px;color:#b4b4b4;transform:scaleX(0.856);">0</span>
<div class="r" style="left:34px;top:137px;width:3px;height:1px;background:#5a5a5a;"></div>
<div class="r" style="left:32px;top:144px;width:5px;height:1px;background:#5a5a5a;"></div>
<div class="r" style="left:34px;top:151px;width:3px;height:1px;background:#5a5a5a;"></div>
<div class="r" style="left:26px;top:158px;width:11px;height:1px;background:#5a5a5a;"></div>
<span class="t " style="left:27.00px;top:160.00px;font-size:8.4px;color:#b4b4b4;transform:scaleX(0.856);">2</span>
<span class="t " style="left:27.00px;top:168.00px;font-size:8.4px;color:#b4b4b4;transform:scaleX(0.856);">0</span>
<span class="t " style="left:27.00px;top:177.00px;font-size:8.4px;color:#b4b4b4;transform:scaleX(0.856);">0</span>
<div class="r" style="left:34px;top:165px;width:3px;height:1px;background:#5a5a5a;"></div>
<div class="r" style="left:32px;top:173px;width:5px;height:1px;background:#5a5a5a;"></div>
<div class="r" style="left:34px;top:180px;width:3px;height:1px;background:#5a5a5a;"></div>
<div class="r" style="left:26px;top:187px;width:11px;height:1px;background:#5a5a5a;"></div>
<span class="t " style="left:27.00px;top:189.00px;font-size:8.4px;color:#b4b4b4;transform:scaleX(0.856);">0</span>
<div class="r" style="left:34px;top:194px;width:3px;height:1px;background:#5a5a5a;"></div>
<div class="r" style="left:32px;top:201px;width:5px;height:1px;background:#5a5a5a;"></div>
<div class="r" style="left:34px;top:209px;width:3px;height:1px;background:#5a5a5a;"></div>
<div class="r" style="left:26px;top:216px;width:11px;height:1px;background:#5a5a5a;"></div>
<span class="t " style="left:27.00px;top:217.00px;font-size:8.4px;color:#b4b4b4;transform:scaleX(0.856);">2</span>
<span class="t " style="left:27.00px;top:226.00px;font-size:8.4px;color:#b4b4b4;transform:scaleX(0.856);">0</span>
<span class="t " style="left:27.00px;top:234.00px;font-size:8.4px;color:#b4b4b4;transform:scaleX(0.856);">0</span>
<div class="r" style="left:34px;top:223px;width:3px;height:1px;background:#5a5a5a;"></div>
<div class="r" style="left:32px;top:230px;width:5px;height:1px;background:#5a5a5a;"></div>
<div class="r" style="left:34px;top:237px;width:3px;height:1px;background:#5a5a5a;"></div>
<div class="r" style="left:26px;top:244px;width:11px;height:1px;background:#5a5a5a;"></div>
<span class="t " style="left:27.00px;top:246.00px;font-size:8.4px;color:#b4b4b4;transform:scaleX(0.856);">4</span>
<span class="t " style="left:27.00px;top:255.00px;font-size:8.4px;color:#b4b4b4;transform:scaleX(0.856);">0</span>
<span class="t " style="left:27.00px;top:263.00px;font-size:8.4px;color:#b4b4b4;transform:scaleX(0.856);">0</span>
<div class="r" style="left:34px;top:252px;width:3px;height:1px;background:#5a5a5a;"></div>
<div class="r" style="left:32px;top:259px;width:5px;height:1px;background:#5a5a5a;"></div>
<div class="r" style="left:34px;top:266px;width:3px;height:1px;background:#5a5a5a;"></div>
<div class="r" style="left:26px;top:273px;width:11px;height:1px;background:#5a5a5a;"></div>
<span class="t " style="left:27.00px;top:275.00px;font-size:8.4px;color:#b4b4b4;transform:scaleX(0.856);">6</span>
<span class="t " style="left:27.00px;top:283.00px;font-size:8.4px;color:#b4b4b4;transform:scaleX(0.856);">0</span>
<span class="t " style="left:27.00px;top:292.00px;font-size:8.4px;color:#b4b4b4;transform:scaleX(0.856);">0</span>
<div class="r" style="left:34px;top:280px;width:3px;height:1px;background:#5a5a5a;"></div>
<div class="r" style="left:32px;top:287px;width:5px;height:1px;background:#5a5a5a;"></div>
<div class="r" style="left:34px;top:295px;width:3px;height:1px;background:#5a5a5a;"></div>
<div class="r" style="left:26px;top:302px;width:11px;height:1px;background:#5a5a5a;"></div>
<span class="t " style="left:27.00px;top:304.00px;font-size:8.4px;color:#b4b4b4;transform:scaleX(0.856);">8</span>
<span class="t " style="left:27.00px;top:312.00px;font-size:8.4px;color:#b4b4b4;transform:scaleX(0.856);">0</span>
<span class="t " style="left:27.00px;top:320.00px;font-size:8.4px;color:#b4b4b4;transform:scaleX(0.856);">0</span>
<div class="r" style="left:34px;top:309px;width:3px;height:1px;background:#5a5a5a;"></div>
<div class="r" style="left:32px;top:316px;width:5px;height:1px;background:#5a5a5a;"></div>
<div class="r" style="left:34px;top:323px;width:3px;height:1px;background:#5a5a5a;"></div>
<div class="r" style="left:26px;top:330px;width:11px;height:1px;background:#5a5a5a;"></div>
<span class="t " style="left:27.00px;top:332.00px;font-size:8.4px;color:#8e8e8e;transform:scaleX(0.856);">1</span>
<span class="t " style="left:27.00px;top:341.00px;font-size:8.4px;color:#8e8e8e;transform:scaleX(0.856);">0</span>
<span class="t " style="left:27.00px;top:349.00px;font-size:8.4px;color:#8e8e8e;transform:scaleX(0.856);">0</span>
<span class="t " style="left:27.00px;top:357.00px;font-size:8.4px;color:#8e8e8e;transform:scaleX(0.856);">0</span>
<div class="r" style="left:34px;top:338px;width:3px;height:1px;background:#5a5a5a;"></div>
<div class="r" style="left:32px;top:345px;width:5px;height:1px;background:#5a5a5a;"></div>
<div class="r" style="left:34px;top:352px;width:3px;height:1px;background:#5a5a5a;"></div>
<div class="r" style="left:26px;top:359px;width:11px;height:1px;background:#5a5a5a;"></div>
<span class="t " style="left:27.00px;top:361.00px;font-size:8.4px;color:#8e8e8e;transform:scaleX(0.856);">1</span>
<span class="t " style="left:27.00px;top:369.00px;font-size:8.4px;color:#8e8e8e;transform:scaleX(0.856);">2</span>
<span class="t " style="left:27.00px;top:378.00px;font-size:8.4px;color:#8e8e8e;transform:scaleX(0.856);">0</span>
<span class="t " style="left:27.00px;top:386.00px;font-size:8.4px;color:#8e8e8e;transform:scaleX(0.856);">0</span>
<div class="r" style="left:34px;top:366px;width:3px;height:1px;background:#5a5a5a;"></div>
<div class="r" style="left:32px;top:374px;width:5px;height:1px;background:#5a5a5a;"></div>
<div class="r" style="left:34px;top:381px;width:3px;height:1px;background:#5a5a5a;"></div>
<div class="r" style="left:26px;top:388px;width:11px;height:1px;background:#5a5a5a;"></div>
<span class="t " style="left:27.00px;top:390.00px;font-size:8.4px;color:#8e8e8e;transform:scaleX(0.856);">1</span>
<span class="t " style="left:27.00px;top:398.00px;font-size:8.4px;color:#8e8e8e;transform:scaleX(0.856);">4</span>
<span class="t " style="left:27.00px;top:406.00px;font-size:8.4px;color:#8e8e8e;transform:scaleX(0.856);">0</span>
<span class="t " style="left:27.00px;top:415.00px;font-size:8.4px;color:#8e8e8e;transform:scaleX(0.856);">0</span>
<div class="r" style="left:34px;top:395px;width:3px;height:1px;background:#5a5a5a;"></div>
<div class="r" style="left:32px;top:402px;width:5px;height:1px;background:#5a5a5a;"></div>
<div class="r" style="left:34px;top:409px;width:3px;height:1px;background:#5a5a5a;"></div>
<div class="r" style="left:26px;top:417px;width:11px;height:1px;background:#5a5a5a;"></div>
<span class="t " style="left:27.00px;top:418.00px;font-size:8.4px;color:#8e8e8e;transform:scaleX(0.856);">1</span>
<span class="t " style="left:27.00px;top:427.00px;font-size:8.4px;color:#8e8e8e;transform:scaleX(0.856);">6</span>
<span class="t " style="left:27.00px;top:435.00px;font-size:8.4px;color:#8e8e8e;transform:scaleX(0.856);">0</span>
<span class="t " style="left:27.00px;top:443.00px;font-size:8.4px;color:#8e8e8e;transform:scaleX(0.856);">0</span>
<div class="r" style="left:34px;top:424px;width:3px;height:1px;background:#5a5a5a;"></div>
<div class="r" style="left:32px;top:431px;width:5px;height:1px;background:#5a5a5a;"></div>
<div class="r" style="left:34px;top:438px;width:3px;height:1px;background:#5a5a5a;"></div>
<div class="r" style="left:26px;top:445px;width:11px;height:1px;background:#5a5a5a;"></div>
<span class="t " style="left:27.00px;top:447.00px;font-size:8.4px;color:#8e8e8e;transform:scaleX(0.856);">1</span>
<span class="t " style="left:27.00px;top:455.00px;font-size:8.4px;color:#8e8e8e;transform:scaleX(0.856);">8</span>
<span class="t " style="left:27.00px;top:464.00px;font-size:8.4px;color:#8e8e8e;transform:scaleX(0.856);">0</span>
<span class="t " style="left:27.00px;top:472.00px;font-size:8.4px;color:#8e8e8e;transform:scaleX(0.856);">0</span>
<div class="r" style="left:34px;top:452px;width:3px;height:1px;background:#5a5a5a;"></div>
<div class="r" style="left:32px;top:460px;width:5px;height:1px;background:#5a5a5a;"></div>
<div class="r" style="left:34px;top:467px;width:3px;height:1px;background:#5a5a5a;"></div>
<div class="r" style="left:26px;top:474px;width:11px;height:1px;background:#5a5a5a;"></div>
<span class="t " style="left:27.00px;top:476.00px;font-size:8.4px;color:#8e8e8e;transform:scaleX(0.856);">2</span>
<span class="t " style="left:27.00px;top:484.00px;font-size:8.4px;color:#8e8e8e;transform:scaleX(0.856);">0</span>
<span class="t " style="left:27.00px;top:492.00px;font-size:8.4px;color:#8e8e8e;transform:scaleX(0.856);">0</span>
<span class="t " style="left:27.00px;top:501.00px;font-size:8.4px;color:#8e8e8e;transform:scaleX(0.856);">0</span>
<div class="r" style="left:34px;top:481px;width:3px;height:1px;background:#5a5a5a;"></div>
<div class="r" style="left:32px;top:488px;width:5px;height:1px;background:#5a5a5a;"></div>
<div class="r" style="left:34px;top:496px;width:3px;height:1px;background:#5a5a5a;"></div>
<div class="r" style="left:26px;top:503px;width:11px;height:1px;background:#5a5a5a;"></div>
<span class="t " style="left:27.00px;top:505.00px;font-size:8.4px;color:#8e8e8e;transform:scaleX(0.856);">2</span>
<span class="t " style="left:27.00px;top:513.00px;font-size:8.4px;color:#8e8e8e;transform:scaleX(0.856);">2</span>
<span class="t " style="left:27.00px;top:521.00px;font-size:8.4px;color:#8e8e8e;transform:scaleX(0.856);">0</span>
<span class="t " style="left:27.00px;top:529.00px;font-size:8.4px;color:#8e8e8e;transform:scaleX(0.856);">0</span>
<div class="r" style="left:34px;top:510px;width:3px;height:1px;background:#5a5a5a;"></div>
<div class="r" style="left:32px;top:517px;width:5px;height:1px;background:#5a5a5a;"></div>
<div class="r" style="left:34px;top:524px;width:3px;height:1px;background:#5a5a5a;"></div>
<div class="r" style="left:26px;top:531px;width:11px;height:1px;background:#5a5a5a;"></div>
<span class="t " style="left:27.00px;top:533.00px;font-size:8.4px;color:#8e8e8e;transform:scaleX(0.856);">2</span>
<span class="t " style="left:27.00px;top:541.00px;font-size:8.4px;color:#8e8e8e;transform:scaleX(0.856);">4</span>
<span class="t " style="left:27.00px;top:550.00px;font-size:8.4px;color:#8e8e8e;transform:scaleX(0.856);">0</span>
<span class="t " style="left:27.00px;top:558.00px;font-size:8.4px;color:#8e8e8e;transform:scaleX(0.856);">0</span>
<div class="r" style="left:34px;top:539px;width:3px;height:1px;background:#5a5a5a;"></div>
<div class="r" style="left:32px;top:546px;width:5px;height:1px;background:#5a5a5a;"></div>
<div class="r" style="left:34px;top:553px;width:3px;height:1px;background:#5a5a5a;"></div>
<div class="r" style="left:26px;top:560px;width:11px;height:1px;background:#5a5a5a;"></div>
<span class="t " style="left:27.00px;top:562.00px;font-size:8.4px;color:#8e8e8e;transform:scaleX(0.856);">2</span>
<span class="t " style="left:27.00px;top:570.00px;font-size:8.4px;color:#8e8e8e;transform:scaleX(0.856);">6</span>
<span class="t " style="left:27.00px;top:578.00px;font-size:8.4px;color:#8e8e8e;transform:scaleX(0.856);">0</span>
<span class="t " style="left:27.00px;top:587.00px;font-size:8.4px;color:#8e8e8e;transform:scaleX(0.856);">0</span>
<div class="r" style="left:34px;top:567px;width:3px;height:1px;background:#5a5a5a;"></div>
<div class="r" style="left:32px;top:574px;width:5px;height:1px;background:#5a5a5a;"></div>
<div class="r" style="left:34px;top:582px;width:3px;height:1px;background:#5a5a5a;"></div>
<div class="r" style="left:26px;top:589px;width:11px;height:1px;background:#5a5a5a;"></div>
<span class="t " style="left:27.00px;top:591.00px;font-size:8.4px;color:#8e8e8e;transform:scaleX(0.856);">2</span>
<span class="t " style="left:27.00px;top:599.00px;font-size:8.4px;color:#8e8e8e;transform:scaleX(0.856);">8</span>
<span class="t " style="left:27.00px;top:607.00px;font-size:8.4px;color:#8e8e8e;transform:scaleX(0.856);">0</span>
<span class="t " style="left:27.00px;top:615.00px;font-size:8.4px;color:#8e8e8e;transform:scaleX(0.856);">0</span>
<div class="r" style="left:34px;top:596px;width:3px;height:1px;background:#5a5a5a;"></div>
<div class="r" style="left:32px;top:603px;width:5px;height:1px;background:#5a5a5a;"></div>
<div class="r" style="left:34px;top:610px;width:3px;height:1px;background:#5a5a5a;"></div>
<div class="r" style="left:26px;top:618px;width:11px;height:1px;background:#5a5a5a;"></div>
<span class="t " style="left:27.00px;top:619.00px;font-size:8.4px;color:#8e8e8e;transform:scaleX(0.856);">3</span>
<span class="t " style="left:27.00px;top:628.00px;font-size:8.4px;color:#8e8e8e;transform:scaleX(0.856);">0</span>
<span class="t " style="left:27.00px;top:636.00px;font-size:8.4px;color:#8e8e8e;transform:scaleX(0.856);">0</span>
<span class="t " style="left:27.00px;top:644.00px;font-size:8.4px;color:#8e8e8e;transform:scaleX(0.856);">0</span>
<div class="r" style="left:34px;top:625px;width:3px;height:1px;background:#5a5a5a;"></div>
<div class="r" style="left:32px;top:632px;width:5px;height:1px;background:#5a5a5a;"></div>
<div class="r" style="left:34px;top:639px;width:3px;height:1px;background:#5a5a5a;"></div>
<div class="r" style="left:26px;top:646px;width:11px;height:1px;background:#5a5a5a;"></div>
<span class="t " style="left:27.00px;top:648.00px;font-size:8.4px;color:#8e8e8e;transform:scaleX(0.856);">3</span>
<span class="t " style="left:27.00px;top:656.00px;font-size:8.4px;color:#8e8e8e;transform:scaleX(0.856);">2</span>
<span class="t " style="left:27.00px;top:665.00px;font-size:8.4px;color:#8e8e8e;transform:scaleX(0.856);">0</span>
<span class="t " style="left:27.00px;top:673.00px;font-size:8.4px;color:#8e8e8e;transform:scaleX(0.856);">0</span>
<div class="r" style="left:34px;top:653px;width:3px;height:1px;background:#5a5a5a;"></div>
<div class="r" style="left:32px;top:661px;width:5px;height:1px;background:#5a5a5a;"></div>
<div class="r" style="left:34px;top:668px;width:3px;height:1px;background:#5a5a5a;"></div>
<div class="r" style="left:26px;top:675px;width:11px;height:1px;background:#5a5a5a;"></div>
<span class="t " style="left:27.00px;top:677.00px;font-size:8.4px;color:#8e8e8e;transform:scaleX(0.856);">3</span>
<span class="t " style="left:27.00px;top:685.00px;font-size:8.4px;color:#8e8e8e;transform:scaleX(0.856);">4</span>
<span class="t " style="left:27.00px;top:693.00px;font-size:8.4px;color:#8e8e8e;transform:scaleX(0.856);">0</span>
<span class="t " style="left:27.00px;top:702.00px;font-size:8.4px;color:#8e8e8e;transform:scaleX(0.856);">0</span>
<div class="r" style="left:34px;top:682px;width:3px;height:1px;background:#5a5a5a;"></div>
<div class="r" style="left:32px;top:689px;width:5px;height:1px;background:#5a5a5a;"></div>
<div class="r" style="left:34px;top:696px;width:3px;height:1px;background:#5a5a5a;"></div>
<div class="r" style="left:26px;top:704px;width:11px;height:1px;background:#5a5a5a;"></div>
<span class="t " style="left:29.50px;top:715.00px;font-size:7.6px;color:#dcdcdc;transform:scaleX(0.776);">20.66%</span>
<span class="t " style="left:71.00px;top:715.00px;font-size:7.6px;color:#dcdcdc;transform:scaleX(0.796);">2232 px x 2854 px (250 ppi)</span>
<span class="t " style="left:165.00px;top:716.00px;font-size:8px;color:#c0c0c0;transform:scaleX(0.901);">›</span>
<span class="t " style="left:3.20px;top:41.00px;font-size:7.4px;color:#e0e0e0;font-weight:700;transform:scaleX(1.166);">»</span>
<div class="r" style="left:0px;top:41px;width:1px;height:679px;background:#474747;"></div>
<div class="r" style="left:23px;top:47.5px;width:2px;height:672.5px;background:#474747;"></div>
<div class="r" style="left:3px;top:62px;width:19px;height:15.5px;background:#2f2f2f;border-radius:1.5px;"></div>
<svg class="r" style="left:7.2px;top:63.7px;" width="10" height="12" viewBox="0 0 10 12"><path d="M5 0 L7 2.4 H5.6 V5.4 H8 V4 L10 6 L8 8 V6.6 H5.6 V9.6 H7 L5 12 L3 9.6 H4.4 V6.6 H2 V8 L0 6 L2 4 V5.4 H4.4 V2.4 H3 Z" fill="#f0f0f0"/></svg>
<svg class="r" style="left:6.5px;top:81.2px;" width="12" height="12" viewBox="0 0 12 12"><rect x="1.6" y="1.6" width="9" height="8.6" stroke="#dedede" fill="none" stroke-width="1.1" stroke-dasharray="2 1.1"/></svg>
<svg class="r" style="left:6.5px;top:99.0px;" width="12" height="12" viewBox="0 0 12 12"><path d="M1 1.5 L6 5 L11 1 L9.5 8 L5.5 6.8 L2.5 10.5" stroke="#dedede" fill="none" stroke-width="1.2"/><path d="M1.2 11.2 L3.8 9.4" stroke="#dedede" fill="none" stroke-width="1.2"/></svg>
<svg class="r" style="left:6.5px;top:118.0px;" width="12" height="12" viewBox="0 0 12 12"><path d="M1 6V1H6" stroke="#dedede" fill="none" stroke-width="1.2" stroke-dasharray="1.6 1"/><rect x="2.2" y="2.2" width="4" height="4" fill="#dedede"/><path d="M5.5 5 L11 8 L8.6 8.7 L7.8 11 Z" fill="#dedede"/></svg>
<svg class="r" style="left:6.5px;top:135.8px;" width="12" height="12" viewBox="0 0 12 12"><path d="M3 0V9H12M0 3H9V12" stroke="#dedede" fill="none" stroke-width="1.4"/></svg>
<svg class="r" style="left:6.5px;top:154.0px;" width="12" height="12" viewBox="0 0 12 12"><rect x="1" y="1.6" width="10" height="8.8" stroke="#dedede" fill="none" stroke-width="1.2"/><path d="M1 1.6L11 10.4M11 1.6L1 10.4" stroke="#dedede" fill="none" stroke-width="1"/></svg>
<svg class="r" style="left:6.5px;top:172.0px;" width="12" height="12" viewBox="0 0 12 12"><path d="M1.2 10.8 L2 8.6 L7 3.6 L8.4 5 L3.4 10 Z" stroke="#dedede" fill="none" stroke-width="1"/><path d="M6.3 2.9 L9.1 5.7 M7.7 4.3 L10.2 1.8" stroke="#dedede" stroke-width="2.2" stroke-linecap="round"/></svg>
<svg class="r" style="left:6.5px;top:190.0px;" width="12" height="12" viewBox="0 0 12 12"><g transform="rotate(-45 6 6)"><rect x="0.2" y="3.6" width="11.6" height="4.8" rx="0.8" fill="#dedede"/><path d="M3 3.6V6M5 3.6V6M7 3.6V6M9 3.6V6" stroke="#535353" stroke-width=".7"/></g></svg>
<svg class="r" style="left:6.5px;top:208.0px;" width="12" height="12" viewBox="0 0 12 12"><path d="M10.6 1.4 L6.2 6" stroke="#dedede" stroke-width="2.3" stroke-linecap="round"/><ellipse cx="3.6" cy="8.6" rx="3" ry="1.7" transform="rotate(-45 3.6 8.6)" fill="#dedede"/><path d="M0.6 11.6 L2.6 9.6" stroke="#dedede" stroke-width="1.2"/></svg>
<svg class="r" style="left:6.5px;top:226.5px;" width="12" height="12" viewBox="0 0 12 12"><circle cx="6" cy="2.6" r="2.2" fill="#dedede"/><path d="M5 4H7L7.6 7H4.4Z" fill="#dedede"/><rect x="1.2" y="6.6" width="9.6" height="2.6" rx=".6" fill="#dedede"/><rect x="1.2" y="10.2" width="9.6" height="1.2" fill="#dedede"/></svg>
<svg class="r" style="left:6.5px;top:244.0px;" width="12" height="12" viewBox="0 0 12 12"><path d="M10.8 1.4 L7 5.6" stroke="#dedede" stroke-width="2.2" stroke-linecap="round"/><ellipse cx="4.6" cy="8.2" rx="2.8" ry="1.6" transform="rotate(-45 4.6 8.2)" fill="#dedede"/><path d="M1.8 11.4 L3.4 9.6" stroke="#dedede" stroke-width="1.2"/><path d="M1 4.2 A3 3 0 0 1 6 2" stroke="#dedede" fill="none" stroke-width="1.1"/><path d="M0 1.6 L0.8 4.8 L3.6 3.6Z" fill="#dedede"/></svg>
<svg class="r" style="left:6.5px;top:262.5px;" width="12" height="12" viewBox="0 0 12 12"><g transform="rotate(-40 6 5)"><rect x="1.2" y="2.6" width="9.8" height="5" rx=".8" stroke="#dedede" fill="none" stroke-width="1.1"/><rect x="5.6" y="2.6" width="5.4" height="5" rx=".8" fill="#dedede"/></g><path d="M2 11H11" stroke="#dedede" fill="none" stroke-width="1"/></svg>
<svg class="r" style="left:6.5px;top:280.0px;" width="12" height="12" viewBox="0 0 12 12"><defs><linearGradient id="tg" x1="0" x2="1"><stop offset="0" stop-color="#3f3f3f"/><stop offset="1" stop-color="#e4e4e4"/></linearGradient></defs><rect x="1" y="1.5" width="10" height="9" fill="url(#tg)" stroke="#dedede" stroke-width="1.1"/></svg>
<svg class="r" style="left:6.5px;top:298.5px;" width="12" height="12" viewBox="0 0 12 12"><path d="M6 0.6 C7.6 3.6 10 5.6 10 8 A4 4 0 0 1 2 8 C2 5.6 4.4 3.6 6 0.6Z" fill="#dedede"/></svg>
<svg class="r" style="left:6.5px;top:316.5px;" width="12" height="12" viewBox="0 0 12 12"><circle cx="7.6" cy="4.2" r="3.4" fill="#dedede"/><circle cx="7.6" cy="4.2" r="1.3" fill="#6a6a6a"/><path d="M5.2 6.6 L1.2 10.8" stroke="#dedede" stroke-width="1.8" stroke-linecap="round"/></svg>
<svg class="r" style="left:6.5px;top:335.0px;" width="12" height="12" viewBox="0 0 12 12"><g transform="rotate(40 6 6)"><path d="M6 0.4 C8.6 2.4 9.6 5.2 8.6 8.4 H3.4 C2.4 5.2 3.4 2.4 6 0.4Z" stroke="#dedede" fill="none" stroke-width="1.2"/><circle cx="6" cy="5.4" r="1" fill="#dedede"/><rect x="3" y="9.3" width="6" height="1.8" fill="#dedede"/></g></svg>
<span class="t" style="left:7.9px;top:352.4px;font-size:15.5px;color:#dedede;font-family:'Liberation Serif',serif;font-weight:700;transform:scaleX(.82);">T</span>
<svg class="r" style="left:6.5px;top:370.5px;" width="12" height="12" viewBox="0 0 12 12"><path d="M2.6 0.6 L10 7.4 L6.8 7.6 L8.6 11.2 L7 11.9 L5.3 8.3 L2.6 10.6Z" fill="#dedede"/></svg>
<svg class="r" style="left:6.5px;top:389.0px;" width="12" height="12" viewBox="0 0 12 12"><rect x="1" y="1.6" width="10" height="8.8" fill="#7b7b7b" stroke="#dedede" stroke-width="1.1"/></svg>
<svg class="r" style="left:6.5px;top:407.0px;" width="12" height="12" viewBox="0 0 12 12"><path d="M3.2 11.4 C1.6 9.4 0.8 7.6 0.8 6.4 C0.8 5.6 1.8 5.4 2.4 6.4 L3 7.4 V2.4 C3 1.4 4.4 1.4 4.4 2.4 V1.4 C4.4 0.4 5.9 0.4 5.9 1.4 V2 C5.9 1 7.4 1 7.4 2 V3 C7.4 2.2 8.8 2.2 8.8 3.2 V8 C8.8 9.6 8.2 10.6 7.6 11.4Z" fill="#dedede"/><path d="M8 1.2 A4.2 4.2 0 0 1 11.4 5" stroke="#dedede" fill="none" stroke-width="1"/></svg>
<svg class="r" style="left:6.5px;top:425.5px;" width="12" height="12" viewBox="0 0 12 12"><circle cx="4.8" cy="4.6" r="3.6" stroke="#dedede" fill="none" stroke-width="1.3"/><path d="M7.4 7.4 L11 11" stroke="#dedede" stroke-width="1.8" stroke-linecap="round"/></svg>
<div class="r" style="left:8.0px;top:448.4px;width:2.3px;height:2.3px;border-radius:50%;background:#dedede;"></div>
<div class="r" style="left:11.5px;top:448.4px;width:2.3px;height:2.3px;border-radius:50%;background:#dedede;"></div>
<div class="r" style="left:15.0px;top:448.4px;width:2.3px;height:2.3px;border-radius:50%;background:#dedede;"></div>
<svg class="r" style="left:19px;top:91.8px;" width="2.6" height="2.6" viewBox="0 0 2.6 2.6"><path d="M2.6 0V2.6H0Z" fill="#9c9c9c"/></svg>
<svg class="r" style="left:19px;top:109.8px;" width="2.6" height="2.6" viewBox="0 0 2.6 2.6"><path d="M2.6 0V2.6H0Z" fill="#9c9c9c"/></svg>
<svg class="r" style="left:19px;top:128.8px;" width="2.6" height="2.6" viewBox="0 0 2.6 2.6"><path d="M2.6 0V2.6H0Z" fill="#9c9c9c"/></svg>
<svg class="r" style="left:19px;top:146.60000000000002px;" width="2.6" height="2.6" viewBox="0 0 2.6 2.6"><path d="M2.6 0V2.6H0Z" fill="#9c9c9c"/></svg>
<svg class="r" style="left:19px;top:182.8px;" width="2.6" height="2.6" viewBox="0 0 2.6 2.6"><path d="M2.6 0V2.6H0Z" fill="#9c9c9c"/></svg>
<svg class="r" style="left:19px;top:200.8px;" width="2.6" height="2.6" viewBox="0 0 2.6 2.6"><path d="M2.6 0V2.6H0Z" fill="#9c9c9c"/></svg>
<svg class="r" style="left:19px;top:218.8px;" width="2.6" height="2.6" viewBox="0 0 2.6 2.6"><path d="M2.6 0V2.6H0Z" fill="#9c9c9c"/></svg>
<svg class="r" style="left:19px;top:237.3px;" width="2.6" height="2.6" viewBox="0 0 2.6 2.6"><path d="M2.6 0V2.6H0Z" fill="#9c9c9c"/></svg>
<svg class="r" style="left:19px;top:254.8px;" width="2.6" height="2.6" viewBox="0 0 2.6 2.6"><path d="M2.6 0V2.6H0Z" fill="#9c9c9c"/></svg>
<svg class="r" style="left:19px;top:273.3px;" width="2.6" height="2.6" viewBox="0 0 2.6 2.6"><path d="M2.6 0V2.6H0Z" fill="#9c9c9c"/></svg>
<svg class="r" style="left:19px;top:290.8px;" width="2.6" height="2.6" viewBox="0 0 2.6 2.6"><path d="M2.6 0V2.6H0Z" fill="#9c9c9c"/></svg>
<svg class="r" style="left:19px;top:309.3px;" width="2.6" height="2.6" viewBox="0 0 2.6 2.6"><path d="M2.6 0V2.6H0Z" fill="#9c9c9c"/></svg>
<svg class="r" style="left:19px;top:327.3px;" width="2.6" height="2.6" viewBox="0 0 2.6 2.6"><path d="M2.6 0V2.6H0Z" fill="#9c9c9c"/></svg>
<svg class="r" style="left:19px;top:345.8px;" width="2.6" height="2.6" viewBox="0 0 2.6 2.6"><path d="M2.6 0V2.6H0Z" fill="#9c9c9c"/></svg>
<svg class="r" style="left:19px;top:363.3px;" width="2.6" height="2.6" viewBox="0 0 2.6 2.6"><path d="M2.6 0V2.6H0Z" fill="#9c9c9c"/></svg>
<svg class="r" style="left:19px;top:381.3px;" width="2.6" height="2.6" viewBox="0 0 2.6 2.6"><path d="M2.6 0V2.6H0Z" fill="#9c9c9c"/></svg>
<svg class="r" style="left:19px;top:399.8px;" width="2.6" height="2.6" viewBox="0 0 2.6 2.6"><path d="M2.6 0V2.6H0Z" fill="#9c9c9c"/></svg>
<svg class="r" style="left:19px;top:417.8px;" width="2.6" height="2.6" viewBox="0 0 2.6 2.6"><path d="M2.6 0V2.6H0Z" fill="#9c9c9c"/></svg>
<svg class="r" style="left:19px;top:453.8px;" width="2.6" height="2.6" viewBox="0 0 2.6 2.6"><path d="M2.6 0V2.6H0Z" fill="#9c9c9c"/></svg>
<div class="r" style="left:5.3px;top:465.4px;width:4px;height:4px;background:#f2f2f2;"></div>
<div class="r" style="left:3.5px;top:463.6px;width:3.8px;height:3.8px;background:#0c0c0c;"></div>
<svg class="r" style="left:13px;top:462.5px;" width="7" height="7" viewBox="0 0 7 7"><path d="M1.6 1.6 H4.6 V4.8" stroke="#dedede" fill="none" stroke-width="1"/><path d="M0 1.6 L2 0 V3.2Z M4.6 6.8 L3 4.8 H6.2Z" fill="#dedede"/></svg>
<div class="r" style="left:9.5px;top:480.7px;width:11px;height:12.3px;background:#fbfbfb;"></div>
<div class="r" style="left:3px;top:473.8px;width:11px;height:12px;background:#fdfdfd;box-shadow:0 0 0 1px #535353;"></div>
<svg class="r" style="left:7px;top:501px;" width="11.5" height="9.5" viewBox="0 0 11.5 9.5"><rect x=".6" y=".6" width="10.3" height="8.3" stroke="#dedede" fill="none" stroke-width="1.1"/><rect x="2.6" y="2.8" width="6.3" height="3.9" stroke="#dedede" fill="none" stroke-width=".9"/></svg>
<svg class="r" style="left:7px;top:519.5px;" width="11.5" height="10" viewBox="0 0 11.5 10"><rect x=".6" y="2.6" width="6.6" height="6.6" stroke="#dedede" fill="none" stroke-width="1.1"/><rect x="3.8" y=".6" width="7" height="5.6" fill="#535353" stroke="#dedede" stroke-width="1.1"/></svg>
<svg class="r" style="left:19px;top:530.8px;" width="2.6" height="2.6" viewBox="0 0 2.6 2.6"><path d="M2.6 0V2.6H0Z" fill="#9c9c9c"/></svg>
<div class="r" style="left:859px;top:60px;width:10px;height:660px;background:#474747;"></div>
<div class="r" style="left:869px;top:41px;width:2px;height:679px;background:#3f3f3f;"></div>
<div class="r" style="left:871px;top:49px;width:24.5px;height:671px;background:#525252;"></div>
<div class="r" style="left:895px;top:41px;width:1.5px;height:679px;background:#444444;"></div>
<span class="t " style="left:886.30px;top:41.00px;font-size:7.4px;color:#e6e6e6;font-weight:700;transform:scaleX(1.118);">«</span>
<span class="t " style="left:1066.00px;top:41.00px;font-size:7.4px;color:#e6e6e6;font-weight:700;transform:scaleX(1.166);">»</span>
<div class="r" style="left:871px;top:97px;width:24.5px;height:1px;background:#444;"></div>
<div class="r" style="left:871px;top:144px;width:24.5px;height:1px;background:#444;"></div>
<div class="r" style="left:871px;top:173px;width:24.5px;height:1px;background:#444;"></div>
<div class="r" style="left:871px;top:202px;width:24.5px;height:1px;background:#444;"></div>
<svg class="r" style="left:876px;top:59px;" width="14" height="13" viewBox="0 0 14 13"><path d="M12.4 1.6 L8.4 6.4" stroke="#e4e4e4" stroke-width="2.6" stroke-linecap="round"/><ellipse cx="5.8" cy="9.2" rx="3.1" ry="1.9" transform="rotate(-48 5.8 9.2)" fill="#e4e4e4"/><path d="M.4 2.4H5M.4 4.6H5M.4 6.8H3.6" stroke="#e4e4e4" stroke-width=".9"/></svg>
<svg class="r" style="left:877px;top:79px;" width="13" height="11" viewBox="0 0 13 11"><circle cx="2.6" cy="2.6" r="2" fill="#e4e4e4"/><path d="M5.2 2.6H11.4" stroke="#e4e4e4" stroke-width="1.2" stroke-dasharray="1.6 .9"/><path d="M.6 8H7" stroke="#e4e4e4" stroke-width="1.4"/><path d="M11.6 4.8V11L7.2 8Z" fill="#e4e4e4"/></svg>
<span class="t " style="left:878.30px;top:108.00px;font-size:12.5px;color:#e4e4e4;-webkit-text-stroke:0.35px #e4e4e4;transform:scaleX(0.888);">A</span>
<div class="r" style="left:887px;top:107.5px;width:1.1px;height:11.5px;background:#e4e4e4;"></div>
<span class="t " style="left:879.50px;top:126.00px;font-size:12.5px;color:#e4e4e4;font-weight:700;transform:scaleX(0.935);">¶</span>
<span class="t" style="left:878px;top:152.5px;font-size:14px;color:#e4e4e4;font-family:'Liberation Serif',serif;font-style:italic;font-weight:700;transform:scaleX(.9);">A</span>
<svg class="r" style="left:877.5px;top:183px;" width="11" height="12" viewBox="0 0 11 12"><path d="M5.5 .8L10.2 3.4V8.6L5.5 11.2L.8 8.6V3.4Z" stroke="#e4e4e4" stroke-width="1.2" fill="none"/><path d="M.8 3.4L5.5 6L10.2 3.4M5.5 6V11.2" stroke="#e4e4e4" stroke-width="1" fill="none"/><circle cx="7.8" cy="7.4" r="1.2" fill="#333"/></svg>
<div class="r" style="left:897px;top:49px;width:183px;height:336px;background:#535353;"></div>
<div class="r" style="left:897px;top:49px;width:183px;height:19px;background:#424242;"></div>
<div class="r" style="left:1009.5px;top:49px;width:40px;height:19.5px;background:#535353;"></div>
<span class="t " style="left:901.50px;top:55.00px;font-size:8px;color:#b4b4b4;transform:scaleX(0.734);">Swatc</span>
<span class="t " style="left:924.00px;top:55.00px;font-size:8px;color:#b4b4b4;transform:scaleX(0.843);">Gradi</span>
<span class="t " style="left:946.50px;top:55.00px;font-size:8px;color:#b4b4b4;transform:scaleX(0.820);">Patter</span>
<span class="t " style="left:969.00px;top:55.00px;font-size:8px;color:#b4b4b4;transform:scaleX(0.814);">Histor</span>
<span class="t " style="left:991.50px;top:55.00px;font-size:8px;color:#b4b4b4;transform:scaleX(0.928);">Actio</span>
<span class="t " style="left:1011.50px;top:55.00px;font-size:8.2px;color:#f4f4f4;font-weight:700;transform:scaleX(0.826);">Properties</span>
<div class="r" style="left:1065px;top:56.2px;width:7px;height:1.1px;background:#c4c4c4;"></div>
<div class="r" style="left:1065px;top:58.5px;width:7px;height:1.1px;background:#c4c4c4;"></div>
<div class="r" style="left:1065px;top:60.800000000000004px;width:7px;height:1.1px;background:#c4c4c4;"></div>
<div class="r" style="left:903px;top:73.5px;width:13px;height:14.5px;background:#3e3e3e;border-radius:1px;"></div>
<svg class="r" style="left:905.5px;top:75.5px;" width="8" height="10.5" viewBox="0 0 8 10.5"><path d="M0.6 0.6 H4.8 L7.4 3.2 V9.9 H0.6Z" stroke="#e6e6e6" stroke-width="1.1" fill="none"/><path d="M4.6 0.6 V3.4 H7.4" stroke="#e6e6e6" stroke-width=".9" fill="none"/></svg>
<span class="t " style="left:920.50px;top:78.00px;font-size:8px;color:#dadada;transform:scaleX(0.782);">Document</span>
<div class="r" style="left:897px;top:91px;width:168px;height:1px;background:#474747;"></div>
<div class="r" style="left:1065.5px;top:92px;width:9px;height:276px;background:#4a4a4a;"></div>
<div class="r" style="left:1067px;top:105.5px;width:6px;height:221.5px;background:#6a6a6a;border-radius:1px;"></div>
<svg class="r" style="left:1067.5px;top:98.5px;" width="5" height="4" viewBox="0 0 5 4"><path d="M0.5 3 L2.5 0.8 L4.5 3" stroke="#9a9a9a" stroke-width="1" fill="none"/></svg>
<svg class="r" style="left:1067.5px;top:359.5px;" width="5" height="4" viewBox="0 0 5 4"><path d="M0.5 0.8 L2.5 3 L4.5 0.8" stroke="#9a9a9a" stroke-width="1" fill="none"/></svg>
<svg class="r" style="left:900.5px;top:100.5px;" width="5" height="4" viewBox="0 0 5 4"><path d="M0.5 0.7 L2.5 3 L4.5 0.7" stroke="#bdbdbd" stroke-width="1" fill="none"/></svg>
<span class="t " style="left:910.00px;top:99.00px;font-size:8.2px;color:#f2f2f2;font-weight:700;transform:scaleX(0.771);">Canvas</span>
<span class="t " style="left:928.80px;top:117.00px;font-size:8px;color:#dadada;transform:scaleX(0.874);">W</span>
<div class="r" style="left:939px;top:115px;width:30.5px;height:9.5px;background:#454545;"></div>
<span class="t " style="left:941.50px;top:117.00px;font-size:8px;color:#ececec;transform:scaleX(0.773);">2232 px</span>
<span class="t " style="left:980.50px;top:117.00px;font-size:8px;color:#a9a9a9;transform:scaleX(0.862);">X</span>
<div class="r" style="left:991.5px;top:115px;width:30.5px;height:9.5px;background:#4c4c4c;"></div>
<span class="t " style="left:994.00px;top:117.00px;font-size:8px;color:#6e6e6e;transform:scaleX(0.794);">0 px</span>
<span class="t " style="left:929.30px;top:134.00px;font-size:8px;color:#dadada;transform:scaleX(0.935);">H</span>
<div class="r" style="left:939px;top:132.5px;width:30.5px;height:9.5px;background:#454545;"></div>
<span class="t " style="left:941.50px;top:134.00px;font-size:8px;color:#ececec;transform:scaleX(0.773);">2854 px</span>
<span class="t " style="left:980.70px;top:134.00px;font-size:8px;color:#a9a9a9;transform:scaleX(0.825);">Y</span>
<div class="r" style="left:991.5px;top:132.5px;width:30.5px;height:9.5px;background:#4c4c4c;"></div>
<span class="t " style="left:994.00px;top:134.00px;font-size:8px;color:#6e6e6e;transform:scaleX(0.794);">0 px</span>
<svg class="r" style="left:908px;top:122px;" width="6" height="12" viewBox="0 0 6 12"><rect x="1.2" y=".8" width="3.6" height="4.6" rx="1.6" stroke="#cdcdcd" fill="none" stroke-width="1.5"/><rect x="1.2" y="6.6" width="3.6" height="4.6" rx="1.6" stroke="#cdcdcd" fill="none" stroke-width="1.5"/><path d="M3 4V8" stroke="#c8c8c8" stroke-width="1"/></svg>
<div class="r" style="left:939px;top:151.5px;width:14px;height:15.5px;background:#323232;border-radius:1px;"></div>
<svg class="r" style="left:942px;top:153.5px;" width="8" height="11.5" viewBox="0 0 8 11.5"><rect x=".6" y=".6" width="6.8" height="10.3" stroke="#ededed" fill="none" stroke-width="1.1"/><circle cx="4" cy="4.6" r="1.5" fill="#ededed"/><path d="M1.6 10 C1.6 7 6.4 7 6.4 10Z" fill="#ededed"/></svg>
<svg class="r" style="left:956px;top:154.5px;" width="12" height="9.5" viewBox="0 0 12 9.5"><rect x=".6" y=".6" width="10.8" height="8.3" stroke="#d4d4d4" fill="none" stroke-width="1.1"/><circle cx="6" cy="3.8" r="1.4" fill="#d4d4d4"/><path d="M3.4 8.2 C3.4 5.6 8.6 5.6 8.6 8.2Z" fill="#d4d4d4"/></svg>
<span class="t " style="left:938.80px;top:177.00px;font-size:8px;color:#dadada;transform:scaleX(0.767);">Resolution: 250 pixels/inch</span>
<span class="t " style="left:919.00px;top:193.00px;font-size:8px;color:#dadada;transform:scaleX(0.750);">Mode</span>
<div class="r" style="left:939px;top:192.5px;width:81.5px;height:12px;background:#454545;border-radius:1px;"></div>
<span class="t " style="left:943.30px;top:195.00px;font-size:8px;color:#ececec;transform:scaleX(0.698);">RGB Color</span>
<svg class="r" style="left:1013.5px;top:197px;" width="5" height="4" viewBox="0 0 5 4"><path d="M0.5 0.7 L2.5 3 L4.5 0.7" stroke="#bdbdbd" stroke-width="1" fill="none"/></svg>
<div class="r" style="left:939px;top:210px;width:81.5px;height:12px;background:#454545;border-radius:1px;"></div>
<span class="t " style="left:943.50px;top:212.00px;font-size:8px;color:#ececec;transform:scaleX(0.761);">16 Bits/Channel</span>
<svg class="r" style="left:1013.5px;top:214.5px;" width="5" height="4" viewBox="0 0 5 4"><path d="M0.5 0.7 L2.5 3 L4.5 0.7" stroke="#bdbdbd" stroke-width="1" fill="none"/></svg>
<span class="t " style="left:926.00px;top:232.00px;font-size:8px;color:#dadada;transform:scaleX(0.783);">Fill</span>
<div class="r" style="left:939px;top:229.5px;width:11px;height:11.5px;background:#585858;border:1px solid #494949;box-sizing:border-box;"></div>
<div class="r" style="left:953px;top:229.5px;width:67.5px;height:11.5px;background:#454545;border-radius:1px;"></div>
<span class="t " style="left:957.50px;top:232.00px;font-size:8px;color:#ececec;transform:scaleX(0.805);">Transparent</span>
<svg class="r" style="left:1013.5px;top:233.5px;" width="5" height="4" viewBox="0 0 5 4"><path d="M0.5 0.7 L2.5 3 L4.5 0.7" stroke="#bdbdbd" stroke-width="1" fill="none"/></svg>
<div class="r" style="left:897px;top:247px;width:168px;height:1px;background:#474747;"></div>
<svg class="r" style="left:900.5px;top:255.5px;" width="5" height="4" viewBox="0 0 5 4"><path d="M0.5 0.7 L2.5 3 L4.5 0.7" stroke="#bdbdbd" stroke-width="1" fill="none"/></svg>
<span class="t " style="left:911.00px;top:254.00px;font-size:8.2px;color:#f2f2f2;font-weight:700;transform:scaleX(0.763);">Rulers &amp; Grids</span>
<div class="r" style="left:903.3px;top:270px;width:14.7px;height:15.6px;background:#333;border-radius:1px;"></div>
<svg class="r" style="left:905.5px;top:272.5px;" width="10" height="10.5" viewBox="0 0 10 10.5"><path d="M0 0H10V2.6H2.6V10.5H0Z" fill="#f0f0f0"/><path d="M4 .4V2M6 .4V2M8 .4V2M.4 4H2M.4 6H2M.4 8H2" stroke="#333" stroke-width=".7"/></svg>
<svg class="r" style="left:925.5px;top:272px;" width="11" height="12" viewBox="0 0 11 12"><path d="M.6 .6H10.4V11.4H.6ZM3.9 .6V11.4M7.2 .6V11.4M.6 4.2H10.4M.6 7.8H10.4" stroke="#d2d2d2" stroke-width="1" fill="none"/></svg>
<svg class="r" style="left:946.5px;top:272px;" width="11" height="12" viewBox="0 0 11 12"><rect x=".6" y=".6" width="9.8" height="10.8" stroke="#d2d2d2" stroke-width="1.1" fill="none"/><path d="M3 3H8V9H3Z" stroke="#bdbdbd" stroke-width=".8" fill="none" stroke-dasharray="1 1"/></svg>
<div class="r" style="left:975px;top:272px;width:45.5px;height:12px;background:#454545;border-radius:1px;"></div>
<span class="t " style="left:979.00px;top:275.00px;font-size:8px;color:#ececec;transform:scaleX(0.726);">Pixels</span>
<svg class="r" style="left:1013.5px;top:276.3px;" width="5" height="4" viewBox="0 0 5 4"><path d="M0.5 0.7 L2.5 3 L4.5 0.7" stroke="#bdbdbd" stroke-width="1" fill="none"/></svg>
<div class="r" style="left:897px;top:294px;width:168px;height:1px;background:#474747;"></div>
<svg class="r" style="left:900.5px;top:303px;" width="5" height="4" viewBox="0 0 5 4"><path d="M0.5 0.7 L2.5 3 L4.5 0.7" stroke="#bdbdbd" stroke-width="1" fill="none"/></svg>
<span class="t " style="left:910.50px;top:302.00px;font-size:8.2px;color:#f2f2f2;font-weight:700;transform:scaleX(0.738);">Guides</span>
<div class="r" style="left:903.3px;top:317px;width:14.7px;height:16.3px;background:#333;border-radius:1px;"></div>
<svg class="r" style="left:905.5px;top:319.5px;" width="10" height="11.5" viewBox="0 0 10 11.5"><path d="M3 0V11.5M0 3.2H10M0 8.2H10" stroke="#e4e4e4" stroke-width="1" fill="none"/></svg>
<svg class="r" style="left:926px;top:319.5px;" width="12" height="11.5" viewBox="0 0 12 11.5"><path d="M3 0V11.5M6.2 0V7M0 3.2H10M0 7H6" stroke="#cfcfcf" stroke-width="1" fill="none"/><rect x="7" y="7.6" width="4.6" height="3.6" fill="#cfcfcf"/><path d="M8 7.6V6.6A1.3 1.3 0 0 1 10.6 6.6V7.6" stroke="#cfcfcf" stroke-width=".8" fill="none"/></svg>
<div class="r" style="left:944px;top:317px;width:15px;height:16.3px;background:#333;border-radius:1px;"></div>
<svg class="r" style="left:946.5px;top:319.5px;" width="11" height="11.5" viewBox="0 0 11 11.5"><path d="M3 0V11.5M0 3H11" stroke="#e4e4e4" stroke-width="1" fill="none"/><path d="M8 4.5V10M6.2 8L8 10.4L9.8 8Z" stroke="#e4e4e4" stroke-width="1" fill="#e4e4e4"/></svg>
<div class="r" style="left:975px;top:320px;width:45.5px;height:12.7px;background:#454545;border-radius:1px;"></div>
<div class="r" style="left:978.7px;top:326.2px;width:27.2px;height:1.3px;background:#e2e2e2;"></div>
<svg class="r" style="left:1013.5px;top:324.5px;" width="5" height="4" viewBox="0 0 5 4"><path d="M0.5 0.7 L2.5 3 L4.5 0.7" stroke="#bdbdbd" stroke-width="1" fill="none"/></svg>
<div class="r" style="left:897px;top:340.5px;width:168px;height:1px;background:#474747;"></div>
<svg class="r" style="left:900.5px;top:350px;" width="5" height="4" viewBox="0 0 5 4"><path d="M0.5 0.7 L2.5 3 L4.5 0.7" stroke="#bdbdbd" stroke-width="1" fill="none"/></svg>
<span class="t " style="left:911.00px;top:349.00px;font-size:8.2px;color:#f2f2f2;font-weight:700;transform:scaleX(0.771);">Quick Actions</span>
<div class="r" style="left:897px;top:385px;width:183px;height:2.5px;background:#3f3f3f;"></div>
<div class="r" style="left:897px;top:387.5px;width:183px;height:332.5px;background:#535353;"></div>
<div class="r" style="left:897px;top:387.5px;width:183px;height:19.5px;background:#424242;"></div>
<div class="r" style="left:897px;top:387.5px;width:28.5px;height:19.5px;background:#535353;"></div>
<span class="t " style="left:901.70px;top:393.00px;font-size:8.2px;color:#f4f4f4;font-weight:700;transform:scaleX(0.711);">Layers</span>
<div class="r" style="left:1065px;top:394.2px;width:7px;height:1.1px;background:#c4c4c4;"></div>
<div class="r" style="left:1065px;top:396.5px;width:7px;height:1.1px;background:#c4c4c4;"></div>
<div class="r" style="left:1065px;top:398.8px;width:7px;height:1.1px;background:#c4c4c4;"></div>
<div class="r" style="left:899.5px;top:414px;width:52.3px;height:11.5px;background:#454545;border-radius:1px;"></div>
<svg class="r" style="left:903px;top:416.3px;" width="7" height="7.5" viewBox="0 0 7 7.5"><circle cx="2.8" cy="2.8" r="2.1" stroke="#e8e8e8" stroke-width="1.1" fill="none"/><path d="M4.4 4.6L6.4 6.9" stroke="#e8e8e8" stroke-width="1.3"/></svg>
<span class="t " style="left:912.50px;top:416.00px;font-size:8px;color:#ececec;transform:scaleX(0.762);">Kind</span>
<svg class="r" style="left:945.5px;top:418px;" width="5" height="4" viewBox="0 0 5 4"><path d="M0.5 0.7 L2.5 3 L4.5 0.7" stroke="#bdbdbd" stroke-width="1" fill="none"/></svg>
<svg class="r" style="left:959.5px;top:415.5px;" width="9" height="8" viewBox="0 0 9 8"><rect x=".6" y=".6" width="7.8" height="6.8" stroke="#dcdcdc" fill="none" stroke-width="1.1"/><path d="M1.4 6.4L3.4 3.6L4.8 5.2L5.8 4.2L7.4 6.4Z" fill="#dcdcdc"/></svg>
<svg class="r" style="left:975px;top:415.7px;" width="8" height="8" viewBox="0 0 8 8"><circle cx="4" cy="4" r="3.3" stroke="#dcdcdc" fill="none" stroke-width="1.1"/><path d="M4 .7A3.3 3.3 0 0 0 4 7.3Z" fill="#dcdcdc" transform="rotate(45 4 4)"/></svg>
<span class="t" style="left:990px;top:415.6px;font-size:10.5px;color:#dcdcdc;font-family:'Liberation Serif',serif;font-weight:700;transform:scaleX(.95);">T</span>
<svg class="r" style="left:1004.5px;top:415.3px;" width="9" height="9" viewBox="0 0 9 9"><rect x="1.6" y="1.6" width="5.8" height="5.8" stroke="#dcdcdc" fill="none" stroke-width="1"/><rect x="0" y="0" width="2.4" height="2.4" fill="#dcdcdc"/><rect x="6.6" y="0" width="2.4" height="2.4" fill="#dcdcdc"/><rect x="0" y="6.6" width="2.4" height="2.4" fill="#dcdcdc"/><rect x="6.6" y="6.6" width="2.4" height="2.4" fill="#dcdcdc"/></svg>
<svg class="r" style="left:1020.5px;top:415px;" width="8" height="9" viewBox="0 0 8 9"><path d="M.6 .6H4.6L7.4 3.2V8.4H.6Z" stroke="#dcdcdc" fill="none" stroke-width="1.1"/><rect x="2.6" y="4" width="4.8" height="4.4" fill="#dcdcdc"/></svg>
<div class="r" style="left:1035.5px;top:413.5px;width:5px;height:5px;border-radius:50%;background:#f2f2f2;"></div>
<div class="r" style="left:1037.6px;top:418.5px;width:0.9px;height:5px;background:#3e3e3e;"></div>
<div class="r" style="left:897px;top:429.5px;width:183px;height:1px;background:#4a4a4a;"></div>
<div class="r" style="left:899.5px;top:433.5px;width:77px;height:11.5px;background:#4d4d4d;border:1px solid #484848;box-sizing:border-box;border-radius:1px;"></div>
<span class="t " style="left:903.30px;top:436.00px;font-size:8px;color:#6f6f6f;transform:scaleX(0.745);">Normal</span>
<span class="t " style="left:983.30px;top:436.00px;font-size:8px;color:#7d7d7d;transform:scaleX(0.767);">Opacity:</span>
<div class="r" style="left:1009.5px;top:434px;width:20.3px;height:10.5px;background:#4b4b4b;border:1px solid #474747;box-sizing:border-box;"></div>
<span class="t " style="left:1012.00px;top:436.00px;font-size:8px;color:#6a6a6a;transform:scaleX(0.709);">100%</span>
<svg class="r" style="left:1033px;top:438px;" width="5" height="4" viewBox="0 0 5 4"><path d="M0.5 0.7 L2.5 3 L4.5 0.7" stroke="#6a6a6a" stroke-width="1" fill="none"/></svg>
<span class="t " style="left:899.60px;top:456.00px;font-size:8px;color:#7d7d7d;transform:scaleX(0.701);">Lock:</span>
<svg class="r" style="left:920.4px;top:454.4px;" width="7.6" height="8.4" viewBox="0 0 7.6 8.4"><rect x=".5" y=".5" width="6.6" height="7.4" stroke="#c2c2c2" fill="none" stroke-width="1"/><path d="M.5 .5H3.8V4.2H.5ZM3.8 4.2H7.1V7.9H3.8Z" fill="#c2c2c2"/></svg>
<svg class="r" style="left:934px;top:454px;" width="8" height="9" viewBox="0 0 8 9"><path d="M7.2 .8L3.6 5" stroke="#c2c2c2" stroke-width="1.5" stroke-linecap="round"/><path d="M3.2 4.6L4 5.4C3.8 7 2.4 8.2.6 8 1.6 7.2 1.6 5.4 3.2 4.6Z" fill="#c2c2c2"/></svg>
<svg class="r" style="left:947px;top:454px;" width="8.5" height="9" viewBox="0 0 8.5 9"><path d="M4.25 0L5.9 2H4.8V4H6.6V2.9L8.5 4.5L6.6 6.1V5H4.8V7H5.9L4.25 9L2.6 7H3.7V5H1.9V6.1L0 4.5L1.9 2.9V4H3.7V2H2.6Z" fill="#c2c2c2"/></svg>
<svg class="r" style="left:961px;top:454.4px;" width="8.6" height="8.4" viewBox="0 0 8.6 8.4"><path d="M2 0V6.4H8.6M0 2H6.6V8.4" stroke="#c2c2c2" stroke-width="1" fill="none"/></svg>
<svg class="r" style="left:975.6px;top:454px;" width="7.4" height="9" viewBox="0 0 7.4 9"><rect x=".4" y="4" width="6.6" height="4.8" fill="#c2c2c2"/><path d="M1.8 4V2.6A1.9 1.9 0 0 1 5.6 2.6V4" stroke="#c2c2c2" stroke-width="1.1" fill="none"/></svg>
<span class="t " style="left:996.50px;top:456.00px;font-size:8px;color:#7d7d7d;transform:scaleX(0.747);">Fill:</span>
<div class="r" style="left:1009.5px;top:454.3px;width:20.3px;height:9px;background:#4b4b4b;border:1px solid #474747;box-sizing:border-box;"></div>
<span class="t " style="left:1012.00px;top:456.00px;font-size:8px;color:#6a6a6a;transform:scaleX(0.709);">100%</span>
<svg class="r" style="left:1033px;top:457px;" width="5" height="4" viewBox="0 0 5 4"><path d="M0.5 0.7 L2.5 3 L4.5 0.7" stroke="#6a6a6a" stroke-width="1" fill="none"/></svg>
<div class="r" style="left:914.5px;top:470px;width:1px;height:236px;background:#4a4a4a;"></div>
<div class="r" style="left:897px;top:485.8px;width:168.5px;height:1px;background:#4a4a4a;"></div>
<div class="r" style="left:897px;top:514.4px;width:168.5px;height:1px;background:#4a4a4a;"></div>
<div class="r" style="left:897px;top:543px;width:168.5px;height:1px;background:#4a4a4a;"></div>
<div class="r" style="left:897px;top:571.6px;width:168.5px;height:1px;background:#4a4a4a;"></div>
<div class="r" style="left:897px;top:600.2px;width:168.5px;height:1px;background:#4a4a4a;"></div>
<div class="r" style="left:897px;top:628.8px;width:168.5px;height:1px;background:#4a4a4a;"></div>
<div class="r" style="left:897px;top:657.4px;width:168.5px;height:1px;background:#4a4a4a;"></div>
<div class="r" style="left:897px;top:686px;width:168.5px;height:1px;background:#4a4a4a;"></div>
<svg class="r" style="left:900.9px;top:475.6px;" width="9" height="6" viewBox="0 0 9 6"><path d="M.5 3 C2.2 .4 6.8 .4 8.5 3 C6.8 5.6 2.2 5.6 .5 3Z" stroke="#bcbcbc" stroke-width="1" fill="#6a6a6a"/><circle cx="4.5" cy="3" r="1.5" fill="#d0d0d0"/></svg>
<svg class="r" style="left:926.8px;top:476.5px;" width="5" height="4" viewBox="0 0 5 4"><path d="M0.5 0.7 L2.5 3 L4.5 0.7" stroke="#bdbdbd" stroke-width="1" fill="none"/></svg>
<svg class="r" style="left:934.5px;top:474.4px;" width="9.5" height="7.8" viewBox="0 0 9.5 7.8"><path d="M.4 7.4V.6H3.4L4.4 1.8H8.6V3" stroke="#e2e2e2" stroke-width="1" fill="none"/><path d="M.4 7.4L1.8 3H9.3L8 7.4Z" fill="#e2e2e2"/></svg>
<span class="t " style="left:951.00px;top:475.00px;font-size:8px;color:#f4f4f4;-webkit-text-stroke:0.25px #f4f4f4;transform:scaleX(0.758);">edita text</span>
<svg class="r" style="left:900.9px;top:497.40000000000003px;" width="9" height="6" viewBox="0 0 9 6"><path d="M.5 3 C2.2 .4 6.8 .4 8.5 3 C6.8 5.6 2.2 5.6 .5 3Z" stroke="#bcbcbc" stroke-width="1" fill="#6a6a6a"/><circle cx="4.5" cy="3" r="1.5" fill="#d0d0d0"/></svg>
<span class="t" style="left:942.5px;top:495px;font-size:15px;color:#ececec;font-family:'Liberation Serif',serif;transform:scaleX(.95);">T</span>
<span class="t " style="left:963.00px;top:497.00px;font-size:8px;color:#e2e2e2;-webkit-text-stroke:0.15px #e2e2e2;transform:scaleX(0.761);">Layer 2</span>
<svg class="r" style="left:900.9px;top:526.0px;" width="9" height="6" viewBox="0 0 9 6"><path d="M.5 3 C2.2 .4 6.8 .4 8.5 3 C6.8 5.6 2.2 5.6 .5 3Z" stroke="#bcbcbc" stroke-width="1" fill="#6a6a6a"/><circle cx="4.5" cy="3" r="1.5" fill="#d0d0d0"/></svg>
<div class="r" style="left:937.7px;top:519.6px;width:15.3px;height:20.2px;background-color:#fff;background-image:linear-gradient(45deg,#ccc 25%,transparent 25%,transparent 75%,#ccc 75%),linear-gradient(45deg,#ccc 25%,transparent 25%,transparent 75%,#ccc 75%);background-size:4px 4px;background-position:0 0,2px 2px;"></div>
<div class="r" style="left:939px;top:521px;width:2px;height:3px;background:#8a8a8a;"></div>
<span class="t " style="left:959.00px;top:526.00px;font-size:8px;color:#e2e2e2;-webkit-text-stroke:0.15px #e2e2e2;transform:scaleX(0.750);">Layer 3</span>
<svg class="r" style="left:900.9px;top:554.6px;" width="9" height="6" viewBox="0 0 9 6"><path d="M.5 3 C2.2 .4 6.8 .4 8.5 3 C6.8 5.6 2.2 5.6 .5 3Z" stroke="#bcbcbc" stroke-width="1" fill="#6a6a6a"/><circle cx="4.5" cy="3" r="1.5" fill="#d0d0d0"/></svg>
<span class="t" style="left:942.5px;top:553px;font-size:15px;color:#ececec;font-family:'Liberation Serif',serif;transform:scaleX(.95);">T</span>
<span class="t " style="left:963.00px;top:554.00px;font-size:8px;color:#e2e2e2;-webkit-text-stroke:0.15px #e2e2e2;transform:scaleX(0.819);">città0000000...&lt;&lt;&lt;&lt;&lt;&lt;&lt;&lt;0 d</span>
<div class="r" style="left:899.8px;top:575.6px;width:10.2px;height:15px;background:transparent;border:1px solid #5f5f5f;box-sizing:border-box;"></div>
<span class="t" style="left:942.5px;top:581px;font-size:15px;color:#ececec;font-family:'Liberation Serif',serif;transform:scaleX(.95);">T</span>
<span class="t " style="left:963.00px;top:583.00px;font-size:8px;color:#e2e2e2;-webkit-text-stroke:0.15px #e2e2e2;transform:scaleX(0.712);">1ee</span>
<svg class="r" style="left:900.9px;top:611.8000000000001px;" width="9" height="6" viewBox="0 0 9 6"><path d="M.5 3 C2.2 .4 6.8 .4 8.5 3 C6.8 5.6 2.2 5.6 .5 3Z" stroke="#bcbcbc" stroke-width="1" fill="#6a6a6a"/><circle cx="4.5" cy="3" r="1.5" fill="#d0d0d0"/></svg>
<span class="t" style="left:942.5px;top:610px;font-size:15px;color:#ececec;font-family:'Liberation Serif',serif;transform:scaleX(.95);">T</span>
<span class="t " style="left:963.00px;top:612.00px;font-size:8px;color:#e2e2e2;-webkit-text-stroke:0.15px #e2e2e2;transform:scaleX(0.712);">169</span>
<svg class="r" style="left:900.9px;top:640.4px;" width="9" height="6" viewBox="0 0 9 6"><path d="M.5 3 C2.2 .4 6.8 .4 8.5 3 C6.8 5.6 2.2 5.6 .5 3Z" stroke="#bcbcbc" stroke-width="1" fill="#6a6a6a"/><circle cx="4.5" cy="3" r="1.5" fill="#d0d0d0"/></svg>
<span class="t" style="left:942.5px;top:639px;font-size:15px;color:#ececec;font-family:'Liberation Serif',serif;transform:scaleX(.95);">T</span>
<span class="t " style="left:963.00px;top:640.00px;font-size:8px;color:#e2e2e2;-webkit-text-stroke:0.15px #e2e2e2;transform:scaleX(0.750);">m</span>
<svg class="r" style="left:900.9px;top:669.0px;" width="9" height="6" viewBox="0 0 9 6"><path d="M.5 3 C2.2 .4 6.8 .4 8.5 3 C6.8 5.6 2.2 5.6 .5 3Z" stroke="#bcbcbc" stroke-width="1" fill="#6a6a6a"/><circle cx="4.5" cy="3" r="1.5" fill="#d0d0d0"/></svg>
<span class="t" style="left:942.5px;top:667px;font-size:15px;color:#ececec;font-family:'Liberation Serif',serif;transform:scaleX(.95);">T</span>
<span class="t " style="left:963.00px;top:669.00px;font-size:8px;color:#e2e2e2;-webkit-text-stroke:0.15px #e2e2e2;transform:scaleX(0.529);">129.........n</span>
<svg class="r" style="left:900.9px;top:697.6px;" width="9" height="6" viewBox="0 0 9 6"><path d="M.5 3 C2.2 .4 6.8 .4 8.5 3 C6.8 5.6 2.2 5.6 .5 3Z" stroke="#bcbcbc" stroke-width="1" fill="#6a6a6a"/><circle cx="4.5" cy="3" r="1.5" fill="#d0d0d0"/></svg>
<span class="t" style="left:942.5px;top:696px;font-size:15px;color:#ececec;font-family:'Liberation Serif',serif;transform:scaleX(.95);">T</span>
<span class="t " style="left:963.00px;top:697.00px;font-size:8px;color:#e2e2e2;-webkit-text-stroke:0.15px #e2e2e2;transform:scaleX(0.717);">01.01.1990</span>
<div class="r" style="left:1065.5px;top:470px;width:9px;height:236px;background:#4a4a4a;"></div>
<div class="r" style="left:1067px;top:491px;width:6px;height:62px;background:#6a6a6a;border-radius:1px;"></div>
<svg class="r" style="left:1067.5px;top:474.5px;" width="5" height="4" viewBox="0 0 5 4"><path d="M0.5 3 L2.5 0.8 L4.5 3" stroke="#9a9a9a" stroke-width="1" fill="none"/></svg>
<div class="r" style="left:897px;top:705.5px;width:183px;height:14.5px;background:#535353;"></div>
<div class="r" style="left:897px;top:705.5px;width:183px;height:1px;background:#4a4a4a;"></div>
<svg class="r" style="left:949px;top:710.5px;" width="9.5" height="6" viewBox="0 0 9.5 6"><rect x=".5" y=".8" width="4.6" height="4.4" rx="2.2" stroke="#7a7a7a" fill="none"/><rect x="4.4" y=".8" width="4.6" height="4.4" rx="2.2" stroke="#7a7a7a" fill="none"/></svg>
<span class="t" style="left:966.5px;top:709.6px;font-size:10.5px;color:#e0e0e0;font-family:'Liberation Serif',serif;font-style:italic;transform:scaleX(.85);">fx</span>
<svg class="r" style="left:982px;top:709px;" width="9.5" height="8.5" viewBox="0 0 9.5 8.5"><rect x=".6" y=".6" width="8.3" height="7.3" fill="#e0e0e0"/><circle cx="4.75" cy="4.25" r="2.3" fill="#535353"/></svg>
<svg class="r" style="left:1000px;top:709px;" width="8.5" height="8.5" viewBox="0 0 8.5 8.5"><circle cx="4.25" cy="4.25" r="3.6" stroke="#e0e0e0" fill="none" stroke-width="1.1"/><path d="M4.25 .65A3.6 3.6 0 0 0 4.25 7.85Z" fill="#e0e0e0" transform="rotate(45 4.25 4.25)"/></svg>
<svg class="r" style="left:1016px;top:709.5px;" width="9" height="7.5" viewBox="0 0 9 7.5"><path d="M0 7.5V0H3.2L4.2 1.2H9V7.5Z" fill="#e0e0e0"/></svg>
<svg class="r" style="left:1034px;top:708.8px;" width="8" height="9" viewBox="0 0 8 9"><rect x=".6" y=".6" width="6.8" height="7.8" stroke="#e0e0e0" fill="none" stroke-width="1.1"/><path d="M4 2.6V6.4M2.1 4.5H5.9" stroke="#e0e0e0" stroke-width="1"/></svg>
<svg class="r" style="left:1050.5px;top:708.8px;" width="7" height="9" viewBox="0 0 7 9"><path d="M.2 1.8H6.8M2.4 1.6V.5H4.6V1.6M1 2.4L1.4 8.5H5.6L6 2.4" stroke="#8a8a8a" fill="none" stroke-width="1"/></svg>
<div class="r" style="left:1074.5px;top:49px;width:1.5px;height:671px;background:#454545;"></div>
<div class="r" style="left:1076px;top:49px;width:4px;height:671px;background:#4f4f4f;"></div>
<span class="t" style="left:854.5px;top:662.2px;font-size:42.5px;color:#1b1b1b;-webkit-text-stroke:1.1px #1b1b1b;font-family:'DejaVu Sans Light','DejaVu Sans',sans-serif;font-weight:200;transform:scaleX(0.739);">EKOGEA.</span>
<span class="t" style="left:997.5px;top:662.2px;font-size:42.5px;color:#6d8d1f;-webkit-text-stroke:1.1px #6d8d1f;font-family:'DejaVu Sans Light','DejaVu Sans',sans-serif;font-weight:200;transform:scaleX(0.761);">ORG</span>
</div></body></html>
